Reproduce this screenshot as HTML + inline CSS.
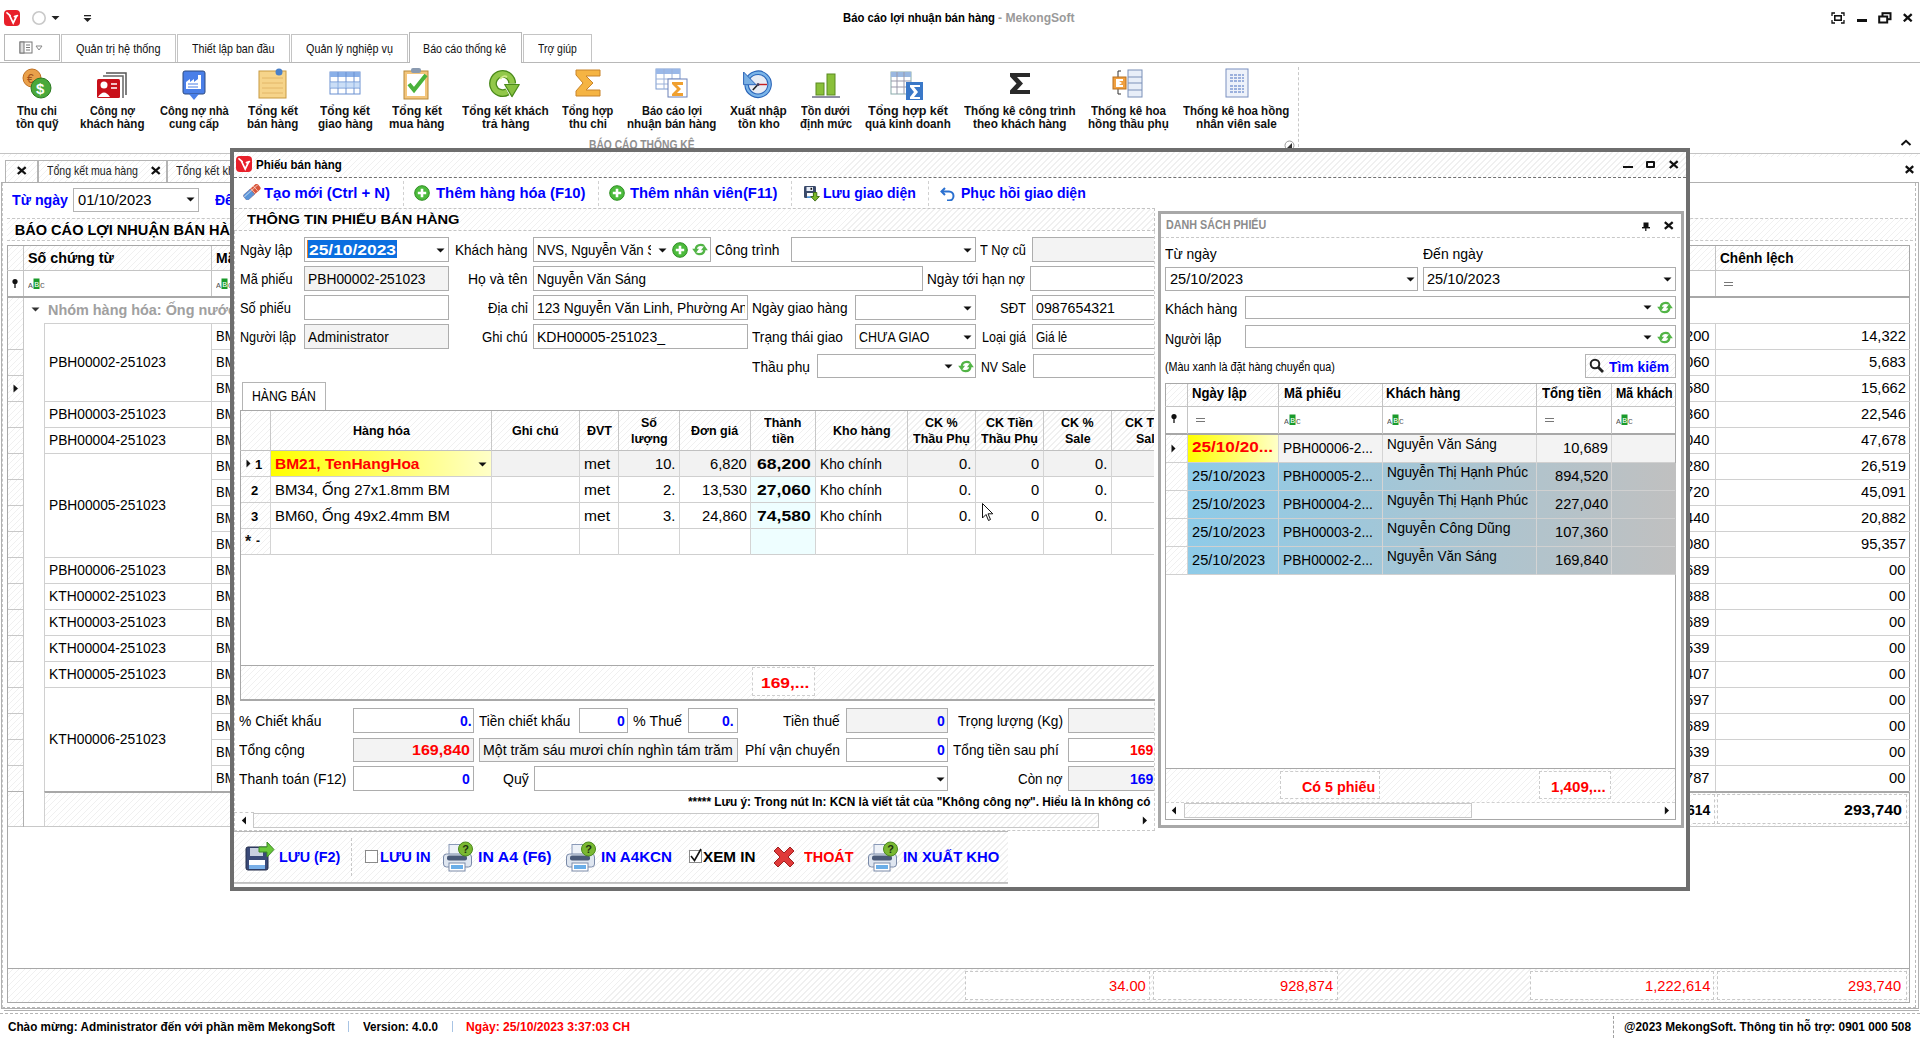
<!DOCTYPE html><html><head><meta charset="utf-8"><style>
html,body{margin:0;padding:0;width:1920px;height:1038px;overflow:hidden;background:#fff}
#root{position:relative;width:1920px;height:1038px;overflow:hidden;font-family:"Liberation Sans",sans-serif;color:#000}
#root div,#root span,#root svg{position:absolute;box-sizing:border-box}
.t{white-space:nowrap;transform-origin:0 0}
.h{background:repeating-linear-gradient(135deg,#fff 0,#fff 3.1px,#f0f0f0 3.1px,#f0f0f0 4.24px)}
.bd{border:1px solid #b4b4b4}
.in{border:1px solid #b9b9b9;background:#fff}
.ing{border:1px solid #b9b9b9;background:#f3f3f3}
</style></head><body><div id="root"><svg style="left:4px;top:10px" width="16" height="16" viewBox="0 0 16 16"><rect x="0" y="0" width="16" height="16" rx="4" fill="#e8202a"/><path d="M3 2.8 L6.2 5.6 M5.2 4.6 L9.2 13 L12.6 6.2 M10.4 6.6 L13.4 5.6" stroke="#fff" stroke-width="1.7" fill="none" stroke-linecap="round"/></svg>
<svg style="left:31px;top:10px" width="16" height="16"><circle cx="8" cy="8" r="6.2" stroke="#c9c9c9" stroke-width="1.6" fill="#fff"/></svg>
<svg style="left:51px;top:15px" width="9" height="6"><path d="M0.5 1 L8.5 1 L4.5 5z" fill="#222"/></svg>
<svg style="left:83px;top:14px" width="9" height="9"><rect x="1" y="1" width="7" height="1.3" fill="#222"/><path d="M0.5 4 L8.5 4 L4.5 8z" fill="#222"/></svg>
<span id="t0" class="t" style="left:843.00px;top:11.74px;font-size:12.48px;line-height:12.48px;font-weight:bold;transform:scaleX(0.9074);">Báo cáo lợi nhuận bán hàng</span>
<span id="t1" class="t" style="left:998.00px;top:11.74px;font-size:12.48px;line-height:12.48px;color:#9a9a9a;font-weight:bold;transform:scaleX(0.9687);">- MekongSoft</span>
<svg style="left:1831px;top:12px" width="14" height="12"><path d="M1 4V1H4 M10 1H13V4 M13 8V11H10 M4 11H1V8" stroke="#111" stroke-width="1.3" fill="none"/><rect x="3.8" y="3.8" width="6.4" height="4.4" stroke="#111" stroke-width="1.6" fill="none"/></svg>
<div style="left:1857px;top:19px;width:10px;height:2.5px;background:#111"></div>
<svg style="left:1878px;top:12px" width="14" height="12"><rect x="4.5" y="1.2" width="8" height="6" stroke="#111" stroke-width="2" fill="none"/><rect x="1.2" y="4.5" width="8" height="6" stroke="#111" stroke-width="2" fill="#fff"/></svg>
<svg style="left:1901.5px;top:12.8px" width="11.5" height="9.5"><path d="M1.80 1.2 L9.70 8.30 M9.70 1.2 L1.80 8.30" stroke="#111" stroke-width="2.3"/></svg>
<div style="left:0px;top:62px;width:1920px;height:1px;background:#b8b8b8"></div>
<div style="left:4px;top:34px;width:56px;height:27px;border:1px solid #b8b8b8;background:#fff"></div>
<svg style="left:19px;top:41px" width="26" height="14"><rect x="1" y="1" width="12" height="11" fill="#fff" stroke="#777" stroke-width="1"/><rect x="1" y="1" width="4" height="11" fill="#ddd" stroke="#777" stroke-width="1"/><path d="M7 4h4M7 6.5h4M7 9h4" stroke="#777"/><path d="M17 5 L23 5 L20 9z" fill="#fff" stroke="#888"/></svg>
<div style="left:61px;top:34px;width:115px;height:28px;border:1px solid #c4c4c4;border-bottom:none;background:#fff"></div>
<span id="t2" class="t" style="left:75.50px;top:43.08px;font-size:12.9px;line-height:12.9px;color:#111;transform:scaleX(0.8482);">Quản trị hệ thống</span>
<div style="left:177px;top:34px;width:113px;height:28px;border:1px solid #c4c4c4;border-bottom:none;background:#fff"></div>
<span id="t3" class="t" style="left:191.75px;top:43.08px;font-size:12.9px;line-height:12.9px;color:#111;transform:scaleX(0.8281);">Thiết lập ban đầu</span>
<div style="left:291px;top:34px;width:117px;height:28px;border:1px solid #c4c4c4;border-bottom:none;background:#fff"></div>
<span id="t4" class="t" style="left:305.50px;top:43.08px;font-size:12.9px;line-height:12.9px;color:#111;transform:scaleX(0.8372);">Quản lý nghiệp vụ</span>
<div style="left:523px;top:34px;width:69px;height:28px;border:1px solid #c4c4c4;border-bottom:none;background:#fff"></div>
<span id="t5" class="t" style="left:537.50px;top:43.08px;font-size:12.9px;line-height:12.9px;color:#111;transform:scaleX(0.8055);">Trợ giúp</span>
<div style="left:409px;top:32px;width:113px;height:31px;border:1px solid #b8b8b8;border-bottom:none;background:#fff"></div>
<span id="t6" class="t" style="left:423.00px;top:43.08px;font-size:12.9px;line-height:12.9px;color:#111;transform:scaleX(0.8296);">Báo cáo thống kê</span>
<span id="t7" class="t" style="left:17.00px;top:105.24px;font-size:12.48px;line-height:12.48px;color:#111;font-weight:bold;transform:scaleX(0.9020);">Thu chi</span>
<span id="t8" class="t" style="left:15.75px;top:118.24px;font-size:12.48px;line-height:12.48px;color:#111;font-weight:bold;transform:scaleX(0.9438);">tồn quỹ</span>
<span id="t9" class="t" style="left:90.00px;top:105.24px;font-size:12.48px;line-height:12.48px;color:#111;font-weight:bold;transform:scaleX(0.8685);">Công nợ</span>
<span id="t10" class="t" style="left:80.25px;top:118.24px;font-size:12.48px;line-height:12.48px;color:#111;font-weight:bold;transform:scaleX(0.9308);">khách hàng</span>
<span id="t11" class="t" style="left:160.03px;top:105.24px;font-size:12.48px;line-height:12.48px;color:#111;font-weight:bold;transform:scaleX(0.8878);">Công nợ nhà</span>
<span id="t12" class="t" style="left:169.40px;top:118.24px;font-size:12.48px;line-height:12.48px;color:#111;font-weight:bold;transform:scaleX(0.9135);">cung cấp</span>
<span id="t13" class="t" style="left:248.00px;top:105.24px;font-size:12.48px;line-height:12.48px;color:#111;font-weight:bold;transform:scaleX(0.9624);">Tổng kết</span>
<span id="t14" class="t" style="left:247.38px;top:118.24px;font-size:12.48px;line-height:12.48px;color:#111;font-weight:bold;transform:scaleX(0.9247);">bán hàng</span>
<span id="t15" class="t" style="left:320.00px;top:105.24px;font-size:12.48px;line-height:12.48px;color:#111;font-weight:bold;transform:scaleX(0.9624);">Tổng kết</span>
<span id="t16" class="t" style="left:317.50px;top:118.24px;font-size:12.48px;line-height:12.48px;color:#111;font-weight:bold;transform:scaleX(0.9339);">giao hàng</span>
<span id="t17" class="t" style="left:392.00px;top:105.24px;font-size:12.48px;line-height:12.48px;color:#111;font-weight:bold;transform:scaleX(0.9624);">Tổng kết</span>
<span id="t18" class="t" style="left:389.25px;top:118.24px;font-size:12.48px;line-height:12.48px;color:#111;font-weight:bold;transform:scaleX(0.9424);">mua hàng</span>
<span id="t19" class="t" style="left:462.02px;top:105.24px;font-size:12.48px;line-height:12.48px;color:#111;font-weight:bold;transform:scaleX(0.9486);">Tổng kết khách</span>
<span id="t20" class="t" style="left:481.52px;top:118.24px;font-size:12.48px;line-height:12.48px;color:#111;font-weight:bold;transform:scaleX(0.9708);">trả hàng</span>
<span id="t21" class="t" style="left:562.38px;top:105.24px;font-size:12.48px;line-height:12.48px;color:#111;font-weight:bold;transform:scaleX(0.8831);">Tổng hợp</span>
<span id="t22" class="t" style="left:569.00px;top:118.24px;font-size:12.48px;line-height:12.48px;color:#111;font-weight:bold;transform:scaleX(0.9297);">thu chi</span>
<span id="t23" class="t" style="left:642.00px;top:105.24px;font-size:12.48px;line-height:12.48px;color:#111;font-weight:bold;transform:scaleX(0.8854);">Báo cáo lợi</span>
<span id="t24" class="t" style="left:627.38px;top:118.24px;font-size:12.48px;line-height:12.48px;color:#111;font-weight:bold;transform:scaleX(0.9270);">nhuận bán hàng</span>
<span id="t25" class="t" style="left:730.02px;top:105.24px;font-size:12.48px;line-height:12.48px;color:#111;font-weight:bold;transform:scaleX(0.9414);">Xuất nhập</span>
<span id="t26" class="t" style="left:737.52px;top:118.24px;font-size:12.48px;line-height:12.48px;color:#111;font-weight:bold;transform:scaleX(0.9271);">tồn kho</span>
<span id="t27" class="t" style="left:801.23px;top:105.24px;font-size:12.48px;line-height:12.48px;color:#111;font-weight:bold;transform:scaleX(0.8816);">Tồn dưới</span>
<span id="t28" class="t" style="left:799.60px;top:118.24px;font-size:12.48px;line-height:12.48px;color:#111;font-weight:bold;transform:scaleX(0.9150);">định mức</span>
<span id="t29" class="t" style="left:867.50px;top:105.24px;font-size:12.48px;line-height:12.48px;color:#111;font-weight:bold;transform:scaleX(1.0061);">Tổng hợp kết</span>
<span id="t30" class="t" style="left:864.62px;top:118.24px;font-size:12.48px;line-height:12.48px;color:#111;font-weight:bold;transform:scaleX(0.9306);">quả kinh doanh</span>
<span id="t31" class="t" style="left:964.25px;top:105.24px;font-size:12.48px;line-height:12.48px;color:#111;font-weight:bold;transform:scaleX(0.9304);">Thống kê công trình</span>
<span id="t32" class="t" style="left:973.25px;top:118.24px;font-size:12.48px;line-height:12.48px;color:#111;font-weight:bold;transform:scaleX(0.9437);">theo khách hàng</span>
<span id="t33" class="t" style="left:1091.25px;top:105.24px;font-size:12.48px;line-height:12.48px;color:#111;font-weight:bold;transform:scaleX(0.9254);">Thống kê hoa</span>
<span id="t34" class="t" style="left:1088.38px;top:118.24px;font-size:12.48px;line-height:12.48px;color:#111;font-weight:bold;transform:scaleX(0.9327);">hồng thầu phụ</span>
<span id="t35" class="t" style="left:1183.28px;top:105.24px;font-size:12.48px;line-height:12.48px;color:#111;font-weight:bold;transform:scaleX(0.9240);">Thống kê hoa hồng</span>
<span id="t36" class="t" style="left:1196.03px;top:118.24px;font-size:12.48px;line-height:12.48px;color:#111;font-weight:bold;transform:scaleX(0.9396);">nhân viên sale</span>
<svg style="left:20.0px;top:66px" width="34" height="34" viewBox="0 0 34 34"><circle cx="12" cy="12" r="9" fill="#e9a04a" stroke="#c07020"/><text x="7" y="17" font-size="12" fill="#a0501a" font-family="Liberation Sans">€</text><circle cx="21" cy="22" r="10" fill="#4aa83a" stroke="#2a7a20"/><text x="16" y="28" font-size="15" font-weight="bold" fill="#fff" font-family="Liberation Sans">$</text></svg>
<svg style="left:95.5px;top:69px" width="34" height="34" viewBox="0 0 34 34"><path d="M10 4h20v22" stroke="#555" fill="none" stroke-width="1.5"/><path d="M7 7h20v22" stroke="#666" fill="none" stroke-width="1.5"/><rect x="1" y="10" width="23" height="19" rx="1.5" fill="#c8101a"/><circle cx="8" cy="16" r="3.5" fill="#fff"/><path d="M2 28 q6 -9 12 0z" fill="#fff"/><path d="M15 15h6M15 19h6" stroke="#fff" stroke-width="1.5"/></svg>
<svg style="left:177.4px;top:69px" width="34" height="34" viewBox="0 0 34 34"><rect x="6" y="2" width="22" height="23" rx="2" fill="#4a7fe8" stroke="#2d4a80"/><path d="M12 25 L17 31 L22 25z" fill="#4a7fe8"/><path d="M9 20V13l4 -3v3l4 -3v3l4 -3V6h3v14z" fill="#fff"/><path d="M11 15h10M11 18h10" stroke="#4a7fe8" stroke-width="1.2"/></svg>
<svg style="left:256.0px;top:66px" width="34" height="34" viewBox="0 0 34 34"><rect x="3" y="5" width="27" height="27" fill="#f6d48a" stroke="#c89a40"/><path d="M6 12h21M6 17h21M6 22h21M6 27h21" stroke="#e0b060" stroke-width="0.8"/><circle cx="23" cy="6" r="3.5" fill="#4a80c8"/></svg>
<svg style="left:328.0px;top:66px" width="34" height="34" viewBox="0 0 34 34"><rect x="2" y="6" width="30" height="22" fill="#fff" stroke="#6a90d0"/><rect x="2" y="6" width="30" height="5" fill="#8ab0e8"/><path d="M2 16h30M2 22h30M10 6v22M18 6v22M26 6v22" stroke="#6a90d0"/><rect x="2" y="16" width="30" height="6" fill="#a8c8f0" opacity="0.6"/></svg>
<svg style="left:400.0px;top:66px" width="34" height="34" viewBox="0 0 34 34"><rect x="4" y="5" width="24" height="28" fill="#f3c57c" stroke="#b88a3a"/><rect x="7" y="8" width="18" height="22" fill="#fff"/><rect x="11" y="2" width="10" height="5" rx="2" fill="#8a9ab0"/><path d="M9 18 L14 24 L26 9" stroke="#4ab23a" stroke-width="4" fill="none"/></svg>
<svg style="left:488.4px;top:66px" width="34" height="34" viewBox="0 0 34 34"><path d="M24.2 17.5 A9.6 9.6 0 1 0 19.4 25.8" stroke="#4a8a1a" stroke-width="7.8" fill="none"/><path d="M24.2 17.5 A9.6 9.6 0 1 0 19.4 25.8" stroke="#92c84a" stroke-width="5.2" fill="none"/><path d="M12.2 13 A5 5 0 0 1 19 11" stroke="#d0ea8a" stroke-width="2" fill="none"/><path d="M16.7 18.5 L31.3 18.5 L24 30.6z" fill="#86c040" stroke="#4a8a1a" stroke-width="1.2" stroke-linejoin="round"/></svg>
<svg style="left:571.0px;top:66px" width="34" height="34" viewBox="0 0 34 34"><path d="M5 4 H29 V10 H15 L22 17 L15 24 H29 V30 H5 V25 L12 17 L5 9z" fill="#f5b443" stroke="#c8842a"/></svg>
<svg style="left:655.0px;top:66px" width="34" height="34" viewBox="0 0 34 34"><rect x="1" y="3" width="24" height="20" fill="#fff" stroke="#7a9ad0"/><rect x="1" y="3" width="24" height="5" fill="#9ab8e8"/><path d="M1 13h24M1 18h24M9 3v20M17 3v20" stroke="#9ab0d8"/><rect x="13" y="13" width="19" height="18" fill="#fff" stroke="#6a80b8"/><path d="M17 16h11v3h-6l4 4-4 4h6v3H17v-2l5-5-5-5z" fill="#f0a030"/></svg>
<svg style="left:741.4px;top:66px" width="34" height="34" viewBox="0 0 34 34"><circle cx="17" cy="18" r="10" fill="#e8ecf4"/><path d="M6.2 14.5 A11.5 11.5 0 1 1 5.6 19" stroke="#2a64b8" stroke-width="4.6" fill="none"/><path d="M6.2 14.5 A11.5 11.5 0 1 1 5.6 19" stroke="#7ab4e8" stroke-width="2.4" fill="none"/><path d="M2.6 6 L2.6 18.7 L15 18.7z" fill="#7ab0e4" stroke="#2a64b8" stroke-width="1" stroke-linejoin="round"/><path d="M17 18.5 L11.8 24" stroke="#222" stroke-width="1.6"/><path d="M17 18.5 H26" stroke="#c82020" stroke-width="1.4"/><circle cx="17" cy="18.5" r="1.5" fill="#446"/></svg>
<svg style="left:808.6px;top:66px" width="34" height="34" viewBox="0 0 34 34"><rect x="7" y="17" width="8" height="12" fill="#8ac03a" stroke="#5a8a20"/><rect x="18" y="8" width="8" height="21" fill="#8ac03a" stroke="#5a8a20"/><path d="M3 31h28" stroke="#446" stroke-width="1.2"/></svg>
<svg style="left:890.0px;top:66px" width="34" height="34" viewBox="0 0 34 34"><rect x="1" y="6" width="20" height="22" fill="#fff" stroke="#8aa"/><rect x="1" y="6" width="20" height="5" fill="#9ab8e0"/><path d="M1 15h20M1 21h20M7 6v22M14 6v22" stroke="#99a"/><rect x="16" y="16" width="17" height="18" fill="#3a78c8"/><path d="M20 19h10v2h-6l4 5-4 5h6v2H20v-2l4-5-4-5z" fill="#fff"/></svg>
<svg style="left:1003.0px;top:66px" width="34" height="34" viewBox="0 0 34 34"><path d="M7 7 H27 V11 H14 L20 17.5 L14 24 H27 V28 H7 V24.5 L13.5 17.5 L7 10.5z" fill="#2a2a2a"/></svg>
<svg style="left:1111.8px;top:66px" width="34" height="34" viewBox="0 0 34 34"><path d="M9 5H6V28H9" stroke="#333" fill="none"/><rect x="16" y="4" width="14" height="27" fill="#e8eef8" stroke="#7a90b8"/><path d="M16 11h14M16 17h14M16 24h14" stroke="#7a90b8"/><rect x="1" y="11" width="13" height="12" fill="#f0a040" stroke="#b87020"/><path d="M4 13h7v2h-4l3 2-3 2h4v2H4z" fill="#fff"/></svg>
<svg style="left:1219.4px;top:66px" width="34" height="34" viewBox="0 0 34 34"><rect x="7" y="3" width="22" height="28" fill="#eef2fa" stroke="#7a90c0"/><path d="M11 9h14M11 12h14M11 15h14M11 20h14M11 23h14M11 26h14" stroke="#4a70c0" stroke-width="1.2" stroke-dasharray="3 1"/></svg>
<div style="left:580px;top:136px;width:130px;height:12px;overflow:hidden"><span id="t37" class="t" style="left:9.00px;top:3.24px;font-size:12.48px;line-height:12.48px;color:#909090;font-weight:bold;transform:scaleX(0.8232);">BÁO CÁO THỐNG KÊ</span></div>
<div style="left:1298px;top:67px;width:0;height:80px;border-left:1px dashed #c8c8c8"></div>
<svg style="left:1284px;top:140px" width="11" height="8"><circle cx="5.5" cy="5.5" r="4.5" fill="#fff" stroke="#999"/><path d="M3 8 L8 8 L8 3z" fill="#333"/></svg>
<svg style="left:1900px;top:139px" width="12" height="7"><path d="M1.5 6 L6 1.8 L10.5 6" stroke="#111" stroke-width="2" fill="none"/></svg>
<div style="left:0px;top:153px;width:1920px;height:1px;background:#c4c4c4"></div>
<div class="h" style="left:0px;top:154px;width:1920px;height:3px;"></div>
<div class="h" style="left:5px;top:160px;width:33px;height:22px;border:1px solid #b4b4b4;border-bottom:none"></div>
<svg style="left:15.899999999999999px;top:165.9px" width="11.5" height="9.2"><path d="M1.80 1.2 L9.70 8.00 M9.70 1.2 L1.80 8.00" stroke="#111" stroke-width="2.3"/></svg>
<div class="h" style="left:38px;top:160px;width:129px;height:22px;border:1px solid #b4b4b4;border-bottom:none"></div>
<span id="t38" class="t" style="left:47.00px;top:165.28px;font-size:12.9px;line-height:12.9px;color:#222;transform:scaleX(0.8192);">Tổng kết mua hàng</span>
<svg style="left:150px;top:166px" width="11.5" height="9.2"><path d="M1.80 1.2 L9.70 8.00 M9.70 1.2 L1.80 8.00" stroke="#111" stroke-width="2.3"/></svg>
<div class="h" style="left:167px;top:160px;width:80px;height:22px;border:1px solid #b4b4b4;border-bottom:none"></div>
<span id="t39" class="t" style="left:176.00px;top:165.28px;font-size:12.9px;line-height:12.9px;color:#222;transform:scaleX(0.8631);">Tổng kết khách trả hàng</span>
<svg style="left:1904px;top:164.8px" width="11" height="9"><path d="M1.80 1.2 L9.20 7.80 M9.20 1.2 L1.80 7.80" stroke="#111" stroke-width="2.3"/></svg>
<div style="left:1px;top:182px;width:1918px;height:827px;border:1px solid #b0b0b0;background:#fff"></div>
<div style="left:2px;top:183px;width:1914px;height:825px;border-right:1px dashed #b8b8b8;border-bottom:1px dashed #b8b8b8;border-left:1px dashed #c8c8c8"></div>
<div style="left:4px;top:1010px;width:1915px;height:1px;background:#b0b0b0"></div>
<div style="left:0;top:1013px;width:1920px;height:0;border-top:1px dashed #b4b4b4"></div>
<span id="t40" class="t" style="left:11.50px;top:192.57px;font-size:14.56px;line-height:14.56px;color:#0000ff;font-weight:bold;transform:scaleX(0.9752);">Từ ngày</span>
<div style="left:73px;top:188px;width:126px;height:24px;border:1px solid #b4b4b4;background:#fff"></div>
<span id="t41" class="t" style="left:78.00px;top:193.87px;font-size:13.97px;line-height:13.97px;transform:scaleX(1.0512);">01/10/2023</span>
<svg style="left:186px;top:197px" width="9" height="6"><path d="M0.5 0.5 L8.5 0.5 L4.5 4.5z" fill="#111"/></svg>
<span id="t42" class="t" style="left:215.00px;top:192.57px;font-size:14.56px;line-height:14.56px;color:#0000ff;font-weight:bold;transform:scaleX(0.9615);">Đến ngày</span>
<div style="left:7px;top:218px;width:1906px;height:23px;border-top:1px dashed #c8c8c8;border-bottom:1px dashed #c8c8c8" class="h"></div>
<span id="t43" class="t" style="left:14.75px;top:222.97px;font-size:14.56px;line-height:14.56px;font-weight:bold;">BÁO CÁO LỢI NHUẬN BÁN HÀNG</span>
<div style="left:7px;top:245px;width:1903px;height:758px;border:1px solid #a8a8a8;background:#fff"></div>
<div class="h" style="left:8px;top:246px;width:1901px;height:24px;"></div>
<div style="left:7px;top:270px;width:1903px;height:1px;background:#c4c4c4"></div>
<div style="left:7px;top:296px;width:1903px;height:2px;background:#a8a8a8"></div>
<div style="left:23px;top:246px;width:1px;height:50px;background:#c4c4c4"></div>
<div style="left:211px;top:246px;width:1px;height:50px;background:#c4c4c4"></div>
<div style="left:1715px;top:246px;width:1px;height:50px;background:#c4c4c4"></div>
<span id="t44" class="t" style="left:28.00px;top:251.47px;font-size:14.56px;line-height:14.56px;font-weight:bold;transform:scaleX(0.9846);">Số chứng từ</span>
<span id="t45" class="t" style="left:216.00px;top:251.47px;font-size:14.56px;line-height:14.56px;font-weight:bold;transform:scaleX(0.9615);">Mã hàng</span>
<span id="t46" class="t" style="left:1720.00px;top:251.47px;font-size:14.56px;line-height:14.56px;font-weight:bold;transform:scaleX(0.9374);">Chênh lệch</span>
<svg style="left:28px;top:278px" width="18" height="12"><text x="0" y="9.5" font-size="8" fill="#555" font-family="Liberation Mono">A</text><rect x="5.5" y="0.5" width="6" height="10.5" fill="#1a9a2a"/><text x="6.2" y="9" font-size="8" fill="#fff" font-family="Liberation Mono">B</text><text x="12" y="9.5" font-size="8" fill="#555" font-family="Liberation Mono">C</text></svg>
<svg style="left:216px;top:278px" width="18" height="12"><text x="0" y="9.5" font-size="8" fill="#555" font-family="Liberation Mono">A</text><rect x="5.5" y="0.5" width="6" height="10.5" fill="#1a9a2a"/><text x="6.2" y="9" font-size="8" fill="#fff" font-family="Liberation Mono">B</text><text x="12" y="9.5" font-size="8" fill="#555" font-family="Liberation Mono">C</text></svg>
<div style="left:1724px;top:282px;width:9px;height:1px;background:#777"></div>
<div style="left:1724px;top:285px;width:9px;height:1px;background:#777"></div>
<svg style="left:11px;top:278px" width="8" height="11"><circle cx="4" cy="3.5" r="2.6" fill="#111"/><path d="M4 5v5" stroke="#111" stroke-width="1.3"/></svg>
<div class="h" style="left:8px;top:298px;width:15px;height:493px;"></div>
<div style="left:23px;top:298px;width:1px;height:493px;background:#c8c8c8"></div>
<svg style="left:31px;top:307px" width="9" height="6"><path d="M0.5 0.5 L8.5 0.5 L4.5 4.5z" fill="#333"/></svg>
<span id="t47" class="t" style="left:48.00px;top:302.97px;font-size:14.56px;line-height:14.56px;color:#a0a0a0;font-weight:bold;transform:scaleX(0.9904);">Nhóm hàng hóa: Ống nước lạnh</span>
<div style="left:44px;top:323px;width:1866px;height:1px;background:#d0d0d0"></div>
<div style="left:8px;top:349px;width:15px;height:1px;background:#c8c8c8"></div>
<div style="left:211px;top:349px;width:1699px;height:1px;background:#d0d0d0"></div>
<span id="t48" class="t" style="left:216.00px;top:329.87px;font-size:13.97px;line-height:13.97px;transform:scaleX(0.9302);">BM21</span>
<span id="t49" class="t" style="left:1860.52px;top:329.42px;font-size:14.51px;line-height:14.51px;transform:scaleX(1.0140);">14,322</span>
<span id="t50" class="t" style="left:1685.46px;top:329.42px;font-size:14.51px;line-height:14.51px;transform:scaleX(1.0140);">200</span>
<div style="left:8px;top:375px;width:15px;height:1px;background:#c8c8c8"></div>
<div style="left:211px;top:375px;width:1699px;height:1px;background:#d0d0d0"></div>
<span id="t51" class="t" style="left:216.00px;top:355.87px;font-size:13.97px;line-height:13.97px;transform:scaleX(0.9302);">BM21</span>
<span id="t52" class="t" style="left:1868.70px;top:355.42px;font-size:14.51px;line-height:14.51px;transform:scaleX(1.0140);">5,683</span>
<span id="t53" class="t" style="left:1685.46px;top:355.42px;font-size:14.51px;line-height:14.51px;transform:scaleX(1.0140);">060</span>
<div style="left:8px;top:401px;width:15px;height:1px;background:#c8c8c8"></div>
<div style="left:211px;top:401px;width:1699px;height:1px;background:#d0d0d0"></div>
<span id="t54" class="t" style="left:216.00px;top:381.87px;font-size:13.97px;line-height:13.97px;transform:scaleX(0.9302);">BM21</span>
<span id="t55" class="t" style="left:1860.52px;top:381.42px;font-size:14.51px;line-height:14.51px;transform:scaleX(1.0140);">15,662</span>
<span id="t56" class="t" style="left:1685.46px;top:381.42px;font-size:14.51px;line-height:14.51px;transform:scaleX(1.0140);">580</span>
<div style="left:8px;top:427px;width:15px;height:1px;background:#c8c8c8"></div>
<div style="left:211px;top:427px;width:1699px;height:1px;background:#d0d0d0"></div>
<span id="t57" class="t" style="left:216.00px;top:407.87px;font-size:13.97px;line-height:13.97px;transform:scaleX(0.9302);">BM21</span>
<span id="t58" class="t" style="left:1860.52px;top:407.42px;font-size:14.51px;line-height:14.51px;transform:scaleX(1.0140);">22,546</span>
<span id="t59" class="t" style="left:1685.46px;top:407.42px;font-size:14.51px;line-height:14.51px;transform:scaleX(1.0140);">360</span>
<div style="left:8px;top:453px;width:15px;height:1px;background:#c8c8c8"></div>
<div style="left:211px;top:453px;width:1699px;height:1px;background:#d0d0d0"></div>
<span id="t60" class="t" style="left:216.00px;top:433.87px;font-size:13.97px;line-height:13.97px;transform:scaleX(0.9302);">BM21</span>
<span id="t61" class="t" style="left:1860.52px;top:433.42px;font-size:14.51px;line-height:14.51px;transform:scaleX(1.0140);">47,678</span>
<span id="t62" class="t" style="left:1685.46px;top:433.42px;font-size:14.51px;line-height:14.51px;transform:scaleX(1.0140);">040</span>
<div style="left:8px;top:479px;width:15px;height:1px;background:#c8c8c8"></div>
<div style="left:211px;top:479px;width:1699px;height:1px;background:#d0d0d0"></div>
<span id="t63" class="t" style="left:216.00px;top:459.87px;font-size:13.97px;line-height:13.97px;transform:scaleX(0.9302);">BM21</span>
<span id="t64" class="t" style="left:1860.52px;top:459.42px;font-size:14.51px;line-height:14.51px;transform:scaleX(1.0140);">26,519</span>
<span id="t65" class="t" style="left:1685.46px;top:459.42px;font-size:14.51px;line-height:14.51px;transform:scaleX(1.0140);">280</span>
<div style="left:8px;top:505px;width:15px;height:1px;background:#c8c8c8"></div>
<div style="left:211px;top:505px;width:1699px;height:1px;background:#d0d0d0"></div>
<span id="t66" class="t" style="left:216.00px;top:485.87px;font-size:13.97px;line-height:13.97px;transform:scaleX(0.9302);">BM21</span>
<span id="t67" class="t" style="left:1860.52px;top:485.42px;font-size:14.51px;line-height:14.51px;transform:scaleX(1.0140);">45,091</span>
<span id="t68" class="t" style="left:1685.46px;top:485.42px;font-size:14.51px;line-height:14.51px;transform:scaleX(1.0140);">720</span>
<div style="left:8px;top:531px;width:15px;height:1px;background:#c8c8c8"></div>
<div style="left:211px;top:531px;width:1699px;height:1px;background:#d0d0d0"></div>
<span id="t69" class="t" style="left:216.00px;top:511.87px;font-size:13.97px;line-height:13.97px;transform:scaleX(0.9302);">BM21</span>
<span id="t70" class="t" style="left:1860.52px;top:511.42px;font-size:14.51px;line-height:14.51px;transform:scaleX(1.0140);">20,882</span>
<span id="t71" class="t" style="left:1685.46px;top:511.42px;font-size:14.51px;line-height:14.51px;transform:scaleX(1.0140);">440</span>
<div style="left:8px;top:557px;width:15px;height:1px;background:#c8c8c8"></div>
<div style="left:211px;top:557px;width:1699px;height:1px;background:#d0d0d0"></div>
<span id="t72" class="t" style="left:216.00px;top:537.87px;font-size:13.97px;line-height:13.97px;transform:scaleX(0.9302);">BM21</span>
<span id="t73" class="t" style="left:1860.52px;top:537.42px;font-size:14.51px;line-height:14.51px;transform:scaleX(1.0140);">95,357</span>
<span id="t74" class="t" style="left:1685.46px;top:537.42px;font-size:14.51px;line-height:14.51px;transform:scaleX(1.0140);">080</span>
<div style="left:8px;top:583px;width:15px;height:1px;background:#c8c8c8"></div>
<div style="left:211px;top:583px;width:1699px;height:1px;background:#d0d0d0"></div>
<span id="t75" class="t" style="left:216.00px;top:563.87px;font-size:13.97px;line-height:13.97px;transform:scaleX(0.9302);">BM21</span>
<span id="t76" class="t" style="left:1889.13px;top:563.42px;font-size:14.51px;line-height:14.51px;transform:scaleX(1.0140);">00</span>
<span id="t77" class="t" style="left:1685.46px;top:563.42px;font-size:14.51px;line-height:14.51px;transform:scaleX(1.0140);">689</span>
<div style="left:8px;top:609px;width:15px;height:1px;background:#c8c8c8"></div>
<div style="left:211px;top:609px;width:1699px;height:1px;background:#d0d0d0"></div>
<span id="t78" class="t" style="left:216.00px;top:589.87px;font-size:13.97px;line-height:13.97px;transform:scaleX(0.9302);">BM21</span>
<span id="t79" class="t" style="left:1889.13px;top:589.42px;font-size:14.51px;line-height:14.51px;transform:scaleX(1.0140);">00</span>
<span id="t80" class="t" style="left:1685.46px;top:589.42px;font-size:14.51px;line-height:14.51px;transform:scaleX(1.0140);">388</span>
<div style="left:8px;top:635px;width:15px;height:1px;background:#c8c8c8"></div>
<div style="left:211px;top:635px;width:1699px;height:1px;background:#d0d0d0"></div>
<span id="t81" class="t" style="left:216.00px;top:615.87px;font-size:13.97px;line-height:13.97px;transform:scaleX(0.9302);">BM21</span>
<span id="t82" class="t" style="left:1889.13px;top:615.42px;font-size:14.51px;line-height:14.51px;transform:scaleX(1.0140);">00</span>
<span id="t83" class="t" style="left:1685.46px;top:615.42px;font-size:14.51px;line-height:14.51px;transform:scaleX(1.0140);">689</span>
<div style="left:8px;top:661px;width:15px;height:1px;background:#c8c8c8"></div>
<div style="left:211px;top:661px;width:1699px;height:1px;background:#d0d0d0"></div>
<span id="t84" class="t" style="left:216.00px;top:641.87px;font-size:13.97px;line-height:13.97px;transform:scaleX(0.9302);">BM21</span>
<span id="t85" class="t" style="left:1889.13px;top:641.42px;font-size:14.51px;line-height:14.51px;transform:scaleX(1.0140);">00</span>
<span id="t86" class="t" style="left:1685.46px;top:641.42px;font-size:14.51px;line-height:14.51px;transform:scaleX(1.0140);">539</span>
<div style="left:8px;top:687px;width:15px;height:1px;background:#c8c8c8"></div>
<div style="left:211px;top:687px;width:1699px;height:1px;background:#d0d0d0"></div>
<span id="t87" class="t" style="left:216.00px;top:667.87px;font-size:13.97px;line-height:13.97px;transform:scaleX(0.9302);">BM21</span>
<span id="t88" class="t" style="left:1889.13px;top:667.42px;font-size:14.51px;line-height:14.51px;transform:scaleX(1.0140);">00</span>
<span id="t89" class="t" style="left:1685.46px;top:667.42px;font-size:14.51px;line-height:14.51px;transform:scaleX(1.0140);">407</span>
<div style="left:8px;top:713px;width:15px;height:1px;background:#c8c8c8"></div>
<div style="left:211px;top:713px;width:1699px;height:1px;background:#d0d0d0"></div>
<span id="t90" class="t" style="left:216.00px;top:693.87px;font-size:13.97px;line-height:13.97px;transform:scaleX(0.9302);">BM21</span>
<span id="t91" class="t" style="left:1889.13px;top:693.42px;font-size:14.51px;line-height:14.51px;transform:scaleX(1.0140);">00</span>
<span id="t92" class="t" style="left:1685.46px;top:693.42px;font-size:14.51px;line-height:14.51px;transform:scaleX(1.0140);">597</span>
<div style="left:8px;top:739px;width:15px;height:1px;background:#c8c8c8"></div>
<div style="left:211px;top:739px;width:1699px;height:1px;background:#d0d0d0"></div>
<span id="t93" class="t" style="left:216.00px;top:719.87px;font-size:13.97px;line-height:13.97px;transform:scaleX(0.9302);">BM21</span>
<span id="t94" class="t" style="left:1889.13px;top:719.42px;font-size:14.51px;line-height:14.51px;transform:scaleX(1.0140);">00</span>
<span id="t95" class="t" style="left:1685.46px;top:719.42px;font-size:14.51px;line-height:14.51px;transform:scaleX(1.0140);">689</span>
<div style="left:8px;top:765px;width:15px;height:1px;background:#c8c8c8"></div>
<div style="left:211px;top:765px;width:1699px;height:1px;background:#d0d0d0"></div>
<span id="t96" class="t" style="left:216.00px;top:745.87px;font-size:13.97px;line-height:13.97px;transform:scaleX(0.9302);">BM21</span>
<span id="t97" class="t" style="left:1889.13px;top:745.42px;font-size:14.51px;line-height:14.51px;transform:scaleX(1.0140);">00</span>
<span id="t98" class="t" style="left:1685.46px;top:745.42px;font-size:14.51px;line-height:14.51px;transform:scaleX(1.0140);">539</span>
<div style="left:8px;top:791px;width:15px;height:1px;background:#c8c8c8"></div>
<div style="left:211px;top:791px;width:1699px;height:1px;background:#d0d0d0"></div>
<span id="t99" class="t" style="left:216.00px;top:771.87px;font-size:13.97px;line-height:13.97px;transform:scaleX(0.9302);">BM21</span>
<span id="t100" class="t" style="left:1889.13px;top:771.42px;font-size:14.51px;line-height:14.51px;transform:scaleX(1.0140);">00</span>
<span id="t101" class="t" style="left:1685.46px;top:771.42px;font-size:14.51px;line-height:14.51px;transform:scaleX(1.0140);">787</span>
<div style="left:44px;top:401px;width:167px;height:1px;background:#d0d0d0"></div>
<span id="t102" class="t" style="left:49.00px;top:355.42px;font-size:14.51px;line-height:14.51px;transform:scaleX(0.9484);">PBH00002-251023</span>
<div style="left:44px;top:427px;width:167px;height:1px;background:#d0d0d0"></div>
<span id="t103" class="t" style="left:49.00px;top:407.42px;font-size:14.51px;line-height:14.51px;transform:scaleX(0.9484);">PBH00003-251023</span>
<div style="left:44px;top:453px;width:167px;height:1px;background:#d0d0d0"></div>
<span id="t104" class="t" style="left:49.00px;top:433.42px;font-size:14.51px;line-height:14.51px;transform:scaleX(0.9484);">PBH00004-251023</span>
<div style="left:44px;top:557px;width:167px;height:1px;background:#d0d0d0"></div>
<span id="t105" class="t" style="left:49.00px;top:498.42px;font-size:14.51px;line-height:14.51px;transform:scaleX(0.9484);">PBH00005-251023</span>
<div style="left:44px;top:583px;width:167px;height:1px;background:#d0d0d0"></div>
<span id="t106" class="t" style="left:49.00px;top:563.42px;font-size:14.51px;line-height:14.51px;transform:scaleX(0.9484);">PBH00006-251023</span>
<div style="left:44px;top:609px;width:167px;height:1px;background:#d0d0d0"></div>
<span id="t107" class="t" style="left:49.00px;top:589.42px;font-size:14.51px;line-height:14.51px;transform:scaleX(0.9547);">KTH00002-251023</span>
<div style="left:44px;top:635px;width:167px;height:1px;background:#d0d0d0"></div>
<span id="t108" class="t" style="left:49.00px;top:615.42px;font-size:14.51px;line-height:14.51px;transform:scaleX(0.9547);">KTH00003-251023</span>
<div style="left:44px;top:661px;width:167px;height:1px;background:#d0d0d0"></div>
<span id="t109" class="t" style="left:49.00px;top:641.42px;font-size:14.51px;line-height:14.51px;transform:scaleX(0.9547);">KTH00004-251023</span>
<div style="left:44px;top:687px;width:167px;height:1px;background:#d0d0d0"></div>
<span id="t110" class="t" style="left:49.00px;top:667.42px;font-size:14.51px;line-height:14.51px;transform:scaleX(0.9547);">KTH00005-251023</span>
<div style="left:44px;top:791px;width:167px;height:1px;background:#d0d0d0"></div>
<span id="t111" class="t" style="left:49.00px;top:732.42px;font-size:14.51px;line-height:14.51px;transform:scaleX(0.9547);">KTH00006-251023</span>
<div style="left:44px;top:323px;width:1px;height:468px;background:#d0d0d0"></div>
<div style="left:211px;top:323px;width:1px;height:468px;background:#d0d0d0"></div>
<div style="left:1715px;top:323px;width:1px;height:468px;background:#d0d0d0"></div>
<svg style="left:13px;top:384px" width="6" height="9"><path d="M0.5 0.5 L5 4.5 L0.5 8.5z" fill="#111"/></svg>
<div class="h" style="left:44px;top:791px;width:1865px;height:35px;border-top:2px solid #a8a8a8;border-left:1px solid #d0d0d0"></div>
<div style="left:8px;top:826px;width:1901px;height:1px;background:#c8c8c8"></div>
<div class="h" style="left:8px;top:791px;width:15px;height:35px;"></div>
<div style="left:8px;top:791px;width:15px;height:1px;background:#b0b0b0"></div>
<div style="left:23px;top:791px;width:1px;height:36px;background:#b0b0b0"></div>
<div style="left:1693px;top:794px;width:22px;height:30px;border:1px dashed #c8c8c8;border-left:none;background:#fff"></div>
<div style="left:1717px;top:794px;width:190px;height:30px;border:1px dashed #c8c8c8;background:#fff"></div>
<span id="t112" class="t" style="left:1844.00px;top:802.97px;font-size:14.56px;line-height:14.56px;font-weight:bold;transform:scaleX(1.1028);">293,740</span>
<span id="t113" class="t" style="left:1647.77px;top:802.97px;font-size:14.56px;line-height:14.56px;font-weight:bold;transform:scaleX(0.9615);">1,222,614</span>
<div class="h" style="left:7px;top:968px;width:1903px;height:35px;border:1px solid #a8a8a8"></div>
<div style="left:965px;top:971px;width:185px;height:29px;border:1px dashed #c8c8c8;background:#fff"></div>
<span id="t114" class="t" style="left:1108.70px;top:979.12px;font-size:14.51px;line-height:14.51px;color:#ff0000;transform:scaleX(1.0140);">34.00</span>
<div style="left:1153px;top:971px;width:185px;height:29px;border:1px dashed #c8c8c8;background:#fff"></div>
<span id="t115" class="t" style="left:1279.85px;top:979.12px;font-size:14.51px;line-height:14.51px;color:#ff0000;transform:scaleX(1.0140);">928,874</span>
<div style="left:1530px;top:971px;width:184px;height:29px;border:1px dashed #c8c8c8;background:#fff"></div>
<span id="t116" class="t" style="left:1644.58px;top:979.12px;font-size:14.51px;line-height:14.51px;color:#ff0000;transform:scaleX(1.0140);">1,222,614</span>
<div style="left:1717px;top:971px;width:190px;height:29px;border:1px dashed #c8c8c8;background:#fff"></div>
<span id="t117" class="t" style="left:1848.35px;top:979.12px;font-size:14.51px;line-height:14.51px;color:#ff0000;transform:scaleX(1.0140);">293,740</span>
<span id="t118" class="t" style="left:8.00px;top:1021.98px;font-size:11.96px;line-height:11.96px;font-weight:bold;transform:scaleX(0.9805);">Chào mừng: Administrator đến với phần mềm MekongSoft</span>
<div style="left:348px;top:1021px;width:1px;height:11px;background:#a8c4e4"></div>
<span id="t119" class="t" style="left:362.50px;top:1021.98px;font-size:11.96px;line-height:11.96px;font-weight:bold;transform:scaleX(0.9730);">Version: 4.0.0</span>
<div style="left:452px;top:1021px;width:1px;height:11px;background:#a8c4e4"></div>
<span id="t120" class="t" style="left:465.50px;top:1021.98px;font-size:11.96px;line-height:11.96px;color:#ff0000;font-weight:bold;transform:scaleX(1.0157);">Ngày: 25/10/2023 3:37:03 CH</span>
<div style="left:1613px;top:1016px;width:0;height:22px;border-left:1px dashed #a0a0a0"></div>
<span id="t121" class="t" style="left:1624.00px;top:1021.98px;font-size:11.96px;line-height:11.96px;font-weight:bold;transform:scaleX(0.9902);">@2023 MekongSoft. Thông tin hỗ trợ: 0901 000 508</span>
<div style="left:230px;top:148px;width:1460px;height:743px;border:4px solid #6e6e6e;background:#fff"></div>
<div class="h" style="left:234px;top:152px;width:1452px;height:25px;"></div>
<div style="left:234px;top:177px;width:1452px;height:0;border-top:1px dashed #707070"></div>
<svg style="left:236px;top:156px" width="16" height="16" viewBox="0 0 16 16"><rect width="16" height="16" rx="4" fill="#e8202a"/><path d="M3 2.8 L6.2 5.6 M5.2 4.6 L9.2 13 L12.6 6.2 M10.4 6.6 L13.4 5.6" stroke="#fff" stroke-width="1.7" fill="none" stroke-linecap="round"/></svg>
<span id="t122" class="t" style="left:256.00px;top:159.24px;font-size:12.48px;line-height:12.48px;font-weight:bold;transform:scaleX(0.9238);">Phiếu bán hàng</span>
<div style="left:1623px;top:165.5px;width:9.5px;height:2.8px;background:#111"></div>
<div style="left:1646px;top:160.8px;width:9.2px;height:7.6px;border:2px solid #111;border-radius:1px"></div>
<svg style="left:1668px;top:160px" width="11.5" height="9.2"><path d="M1.80 1.2 L9.70 8.00 M9.70 1.2 L1.80 8.00" stroke="#111" stroke-width="2.3"/></svg>
<svg style="left:243px;top:184px" width="18" height="16" viewBox="0 0 18 16"><g transform="translate(9,8) rotate(-42)"><rect x="-9.5" y="-3.6" width="19" height="7.2" rx="2.2" fill="#d8553a"/><rect x="-9.5" y="-3.6" width="8.5" height="7.2" rx="2.2" fill="#5a94d8"/><rect x="-1.5" y="-3.6" width="2" height="7.2" fill="#5a94d8"/><path d="M1.5 -3.6 V3.6 M5 -3.6 V3.6" stroke="#f8c8b8" stroke-width="0.8"/><path d="M-9 -1.5 H9" stroke="#fff" stroke-opacity="0.5" stroke-width="1"/></g></svg>
<span id="t123" class="t" style="left:264.00px;top:186.42px;font-size:14.04px;line-height:14.04px;color:#0000ff;font-weight:bold;transform:scaleX(1.0612);">Tạo mới (Ctrl + N)</span>
<div style="left:402.5px;top:181px;width:0;height:25px;border-left:1px dashed #d0d0d0"></div>
<div style="left:597.5px;top:181px;width:0;height:25px;border-left:1px dashed #d0d0d0"></div>
<div style="left:790.5px;top:181px;width:0;height:25px;border-left:1px dashed #d0d0d0"></div>
<div style="left:928px;top:181px;width:0;height:25px;border-left:1px dashed #d0d0d0"></div>
<svg style="left:414px;top:185px" width="16" height="16" viewBox="0 0 16 16"><circle cx="8" cy="8" r="7.3" fill="#4cbb3c" stroke="#2e8e22"/><path d="M8 3.8v8.4M3.8 8h8.4" stroke="#fff" stroke-width="2.6"/></svg>
<span id="t124" class="t" style="left:435.50px;top:186.42px;font-size:14.04px;line-height:14.04px;color:#0000ff;font-weight:bold;transform:scaleX(1.0595);">Thêm hàng hóa (F10)</span>
<svg style="left:609px;top:185px" width="16" height="16" viewBox="0 0 16 16"><circle cx="8" cy="8" r="7.3" fill="#4cbb3c" stroke="#2e8e22"/><path d="M8 3.8v8.4M3.8 8h8.4" stroke="#fff" stroke-width="2.6"/></svg>
<span id="t125" class="t" style="left:630.00px;top:186.42px;font-size:14.04px;line-height:14.04px;color:#0000ff;font-weight:bold;transform:scaleX(1.0569);">Thêm nhân viên(F11)</span>
<svg style="left:803px;top:185px" width="18" height="17" viewBox="0 0 18 17"><rect x="1" y="1" width="12" height="12" rx="1.2" fill="#3a4a6a"/><rect x="3.5" y="2" width="6.5" height="4" fill="#e8eef8"/><rect x="7.5" y="2.8" width="1.6" height="2" fill="#111"/><rect x="4" y="8" width="6" height="5" fill="#fff"/><rect x="4" y="11.3" width="6" height="1.7" fill="#4a90d8"/><path d="M10.4 7.5h3.4v4h2.6l-4.3 4.6-4.3-4.6h2.6z" fill="#7ab828" stroke="#3a6a10" stroke-width="0.9"/></svg>
<span id="t126" class="t" style="left:823.00px;top:186.42px;font-size:14.04px;line-height:14.04px;color:#0000ff;font-weight:bold;">Lưu giao diện</span>
<svg style="left:940px;top:185px" width="16" height="16" viewBox="0 0 16 16"><path d="M5 3 L1.5 6.5 L5 10" stroke="#2a70d0" stroke-width="2" fill="none"/><path d="M2 6.5 H9 A4.5 4.5 0 0 1 9 15.5 H7" stroke="#2a70d0" stroke-width="2" fill="none"/></svg>
<span id="t127" class="t" style="left:961.00px;top:186.42px;font-size:14.04px;line-height:14.04px;color:#0000ff;font-weight:bold;">Phục hồi giao diện</span>
<div class="h" style="left:234px;top:208px;width:921px;height:23px;border-top:1px dashed #c4c4c4;border-bottom:1px dashed #c4c4c4;border-right:1px dashed #c4c4c4"></div>
<span id="t128" class="t" style="left:247.00px;top:213.36px;font-size:13.52px;line-height:13.52px;font-weight:bold;transform:scaleX(1.0843);">THÔNG TIN PHIẾU BÁN HÀNG</span>
<div style="left:1154px;top:231px;width:0;height:600px;border-left:1px dashed #d0d0d0"></div>
<div style="left:234px;top:231px;width:0;height:600px;border-left:1px dashed #c8c8c8"></div>
<span id="t129" class="t" style="left:239.60px;top:243.22px;font-size:14.51px;line-height:14.51px;transform:scaleX(0.9173);">Ngày lập</span>
<div style="left:304px;top:237px;width:145px;height:24.5px;border:1px solid #adadad;background:#fff"></div>
<div style="left:308px;top:240px;width:89px;height:17.5px;background:#0a6ee0"></div>
<div style="left:306.5px;top:240px;width:1.5px;height:17.5px;background:#f08020"></div>
<span id="t130" class="t" style="left:309.00px;top:242.77px;font-size:14.56px;line-height:14.56px;color:#fff;font-weight:bold;transform:scaleX(1.1948);">25/10/2023</span>
<svg style="left:436.0px;top:248.0px" width="9" height="5"><path d="M0.5 0.5 L8.5 0.5 L4.5 4.5z" fill="#111"/></svg>
<span id="t131" class="t" style="left:455.00px;top:243.22px;font-size:14.51px;line-height:14.51px;transform:scaleX(0.9366);">Khách hàng</span>
<div style="left:533px;top:237px;width:178px;height:24.5px;border:1px solid #adadad;background:#fff"></div>
<div style="left:534px;top:238px;width:117px;height:22px;overflow:hidden"><span id="t132" class="t" style="left:3.00px;top:5.22px;font-size:14.51px;line-height:14.51px;transform:scaleX(0.9060);">NVS, Nguyễn Văn Sáng</span></div>
<svg style="left:657.5px;top:248.0px" width="9" height="5"><path d="M0.5 0.5 L8.5 0.5 L4.5 4.5z" fill="#111"/></svg>
<svg style="left:672px;top:242px" width="16" height="16" viewBox="0 0 16 16"><circle cx="8" cy="8" r="7.3" fill="#4cbb3c" stroke="#2e8e22"/><path d="M8 3.8v8.4M3.8 8h8.4" stroke="#fff" stroke-width="2.6"/></svg>
<svg style="left:692px;top:242px" width="16" height="15" viewBox="0 0 16 15"><path d="M3.6 8 C3.6 4.6 5.8 2.8 8.6 2.8 C10.2 2.8 11.2 3.3 12 4" stroke="#52b446" stroke-width="2.3" fill="none"/><path d="M0.2 6.8 L7 6.8 L3.6 11.6z" fill="#52b446"/><path d="M12.4 7 C12.4 10.4 10.2 12.2 7.4 12.2 C5.8 12.2 4.8 11.7 4 11" stroke="#52b446" stroke-width="2.3" fill="none"/><path d="M15.8 8.2 L9 8.2 L12.4 3.4z" fill="#52b446"/></svg>
<span id="t133" class="t" style="left:715.00px;top:243.22px;font-size:14.51px;line-height:14.51px;transform:scaleX(0.9525);">Công trình</span>
<div style="left:790.5px;top:237px;width:185.0px;height:24.5px;border:1px solid #adadad;background:#fff"></div>
<svg style="left:962.5px;top:248.0px" width="9" height="5"><path d="M0.5 0.5 L8.5 0.5 L4.5 4.5z" fill="#111"/></svg>
<span id="t134" class="t" style="left:980.00px;top:243.22px;font-size:14.51px;line-height:14.51px;transform:scaleX(0.8854);">T Nợ cũ</span>
<div style="left:1032px;top:237px;width:122px;height:24.5px;border:1px solid #adadad;border-right:none;background:#f3f3f3"></div>
<span id="t135" class="t" style="left:239.60px;top:272.22px;font-size:14.51px;line-height:14.51px;transform:scaleX(0.8800);">Mã phiếu</span>
<div style="left:304px;top:266px;width:145px;height:24.5px;border:1px solid #adadad;background:#f3f3f3"></div>
<span id="t136" class="t" style="left:308.00px;top:272.22px;font-size:14.51px;line-height:14.51px;transform:scaleX(0.9525);">PBH00002-251023</span>
<span id="t137" class="t" style="left:468.00px;top:272.22px;font-size:14.51px;line-height:14.51px;transform:scaleX(0.9585);">Họ và tên</span>
<div style="left:533px;top:266px;width:389.5px;height:24.5px;border:1px solid #adadad;background:#fff"></div>
<span id="t138" class="t" style="left:537.00px;top:272.22px;font-size:14.51px;line-height:14.51px;transform:scaleX(0.9261);">Nguyễn Văn Sáng</span>
<span id="t139" class="t" style="left:927.00px;top:272.22px;font-size:14.51px;line-height:14.51px;transform:scaleX(0.9381);">Ngày tới hạn nợ</span>
<div style="left:1030px;top:266px;width:124px;height:24.5px;border:1px solid #adadad;border-right:none;background:#fff"></div>
<span id="t140" class="t" style="left:239.60px;top:301.22px;font-size:14.51px;line-height:14.51px;transform:scaleX(0.8908);">Số phiếu</span>
<div style="left:304px;top:295px;width:145px;height:24.5px;border:1px solid #adadad;background:#fff"></div>
<span id="t141" class="t" style="left:487.50px;top:301.22px;font-size:14.51px;line-height:14.51px;transform:scaleX(0.9024);">Địa chỉ</span>
<div style="left:533px;top:295px;width:214.5px;height:24.5px;border:1px solid #adadad;background:#fff"></div>
<div style="left:534px;top:296px;width:211px;height:22px;overflow:hidden"><span id="t142" class="t" style="left:3.00px;top:5.22px;font-size:14.51px;line-height:14.51px;transform:scaleX(0.9488);">123 Nguyễn Văn Linh, Phường An Khánh</span></div>
<span id="t143" class="t" style="left:752.00px;top:301.22px;font-size:14.51px;line-height:14.51px;transform:scaleX(0.9402);">Ngày giao hàng</span>
<div style="left:855px;top:295px;width:120.5px;height:24.5px;border:1px solid #adadad;background:#fff"></div>
<svg style="left:962.5px;top:306.0px" width="9" height="5"><path d="M0.5 0.5 L8.5 0.5 L4.5 4.5z" fill="#111"/></svg>
<span id="t144" class="t" style="left:1000.00px;top:301.22px;font-size:14.51px;line-height:14.51px;transform:scaleX(0.8966);">SĐT</span>
<div style="left:1032px;top:295px;width:122px;height:24.5px;border:1px solid #adadad;border-right:none;background:#fff"></div>
<span id="t145" class="t" style="left:1036.00px;top:301.22px;font-size:14.51px;line-height:14.51px;transform:scaleX(0.9795);">0987654321</span>
<span id="t146" class="t" style="left:239.60px;top:330.22px;font-size:14.51px;line-height:14.51px;transform:scaleX(0.8701);">Người lập</span>
<div style="left:304px;top:324px;width:145px;height:24.5px;border:1px solid #adadad;background:#f3f3f3"></div>
<span id="t147" class="t" style="left:308.00px;top:330.22px;font-size:14.51px;line-height:14.51px;transform:scaleX(0.9453);">Administrator</span>
<span id="t148" class="t" style="left:482.00px;top:330.22px;font-size:14.51px;line-height:14.51px;transform:scaleX(0.9103);">Ghi chú</span>
<div style="left:533px;top:324px;width:214.5px;height:24.5px;border:1px solid #adadad;background:#fff"></div>
<span id="t149" class="t" style="left:537.00px;top:330.22px;font-size:14.51px;line-height:14.51px;transform:scaleX(0.9681);">KDH00005-251023_</span>
<span id="t150" class="t" style="left:752.00px;top:330.22px;font-size:14.51px;line-height:14.51px;transform:scaleX(0.9459);">Trạng thái giao</span>
<div style="left:855px;top:324px;width:120.5px;height:24.5px;border:1px solid #adadad;background:#fff"></div>
<span id="t151" class="t" style="left:859.00px;top:330.22px;font-size:14.51px;line-height:14.51px;transform:scaleX(0.8547);">CHƯA GIAO</span>
<svg style="left:962.5px;top:335.0px" width="9" height="5"><path d="M0.5 0.5 L8.5 0.5 L4.5 4.5z" fill="#111"/></svg>
<span id="t152" class="t" style="left:982.00px;top:330.22px;font-size:14.51px;line-height:14.51px;transform:scaleX(0.8662);">Loại giá</span>
<div style="left:1032px;top:324px;width:122px;height:24.5px;border:1px solid #adadad;border-right:none;background:#fff"></div>
<span id="t153" class="t" style="left:1036.00px;top:330.22px;font-size:14.51px;line-height:14.51px;transform:scaleX(0.8247);">Giá lẻ</span>
<span id="t154" class="t" style="left:752.00px;top:359.97px;font-size:14.51px;line-height:14.51px;transform:scaleX(0.9465);">Thầu phụ</span>
<div style="left:816.5px;top:353.75px;width:159.5px;height:24.5px;border:1px solid #adadad;background:#fff"></div>
<svg style="left:943.5px;top:364.2px" width="9" height="5"><path d="M0.5 0.5 L8.5 0.5 L4.5 4.5z" fill="#111"/></svg>
<svg style="left:958px;top:358.75px" width="16" height="15" viewBox="0 0 16 15"><path d="M3.6 8 C3.6 4.6 5.8 2.8 8.6 2.8 C10.2 2.8 11.2 3.3 12 4" stroke="#52b446" stroke-width="2.3" fill="none"/><path d="M0.2 6.8 L7 6.8 L3.6 11.6z" fill="#52b446"/><path d="M12.4 7 C12.4 10.4 10.2 12.2 7.4 12.2 C5.8 12.2 4.8 11.7 4 11" stroke="#52b446" stroke-width="2.3" fill="none"/><path d="M15.8 8.2 L9 8.2 L12.4 3.4z" fill="#52b446"/></svg>
<span id="t155" class="t" style="left:981.00px;top:359.97px;font-size:14.51px;line-height:14.51px;transform:scaleX(0.8458);">NV Sale</span>
<div style="left:1033px;top:353.75px;width:121px;height:24.5px;border:1px solid #adadad;border-right:none;background:#fff"></div>
<div style="left:242px;top:382px;width:84px;height:29px;border:1px solid #b4b4b4;border-bottom:none;background:#fff"></div>
<span id="t156" class="t" style="left:252.00px;top:390.37px;font-size:13.97px;line-height:13.97px;transform:scaleX(0.8737);">HÀNG BÁN</span>
<div style="left:240px;top:410px;width:915px;height:291px;border:1px solid #a8a8a8;border-right:none;background:#fff"></div>
<div class="h" style="left:241px;top:411px;width:913px;height:39px;"></div>
<div style="left:240px;top:450px;width:914px;height:1px;background:#c0c0c0"></div>
<div style="left:270px;top:411px;width:1px;height:144px;background:#c8c8c8"></div>
<div style="left:491px;top:411px;width:1px;height:144px;background:#c8c8c8"></div>
<div style="left:579px;top:411px;width:1px;height:144px;background:#c8c8c8"></div>
<div style="left:618px;top:411px;width:1px;height:144px;background:#c8c8c8"></div>
<div style="left:679px;top:411px;width:1px;height:144px;background:#c8c8c8"></div>
<div style="left:750px;top:411px;width:1px;height:144px;background:#c8c8c8"></div>
<div style="left:815px;top:411px;width:1px;height:144px;background:#c8c8c8"></div>
<div style="left:907px;top:411px;width:1px;height:144px;background:#c8c8c8"></div>
<div style="left:975px;top:411px;width:1px;height:144px;background:#c8c8c8"></div>
<div style="left:1043px;top:411px;width:1px;height:144px;background:#c8c8c8"></div>
<div style="left:1111px;top:411px;width:1px;height:144px;background:#c8c8c8"></div>
<span id="t157" class="t" style="left:352.52px;top:423.90px;font-size:13.0px;line-height:13.0px;font-weight:bold;transform:scaleX(0.9615);">Hàng hóa</span>
<span id="t158" class="t" style="left:512.34px;top:423.90px;font-size:13.0px;line-height:13.0px;font-weight:bold;transform:scaleX(0.9615);">Ghi chú</span>
<span id="t159" class="t" style="left:586.70px;top:423.90px;font-size:13.0px;line-height:13.0px;font-weight:bold;transform:scaleX(0.9615);">ĐVT</span>
<span id="t160" class="t" style="left:691.46px;top:423.90px;font-size:13.0px;line-height:13.0px;font-weight:bold;transform:scaleX(0.9615);">Đơn giá</span>
<span id="t161" class="t" style="left:832.68px;top:423.90px;font-size:13.0px;line-height:13.0px;font-weight:bold;transform:scaleX(0.9615);">Kho hàng</span>
<span id="t162" class="t" style="left:641.01px;top:416.00px;font-size:13.0px;line-height:13.0px;font-weight:bold;transform:scaleX(0.9615);">Số</span>
<span id="t163" class="t" style="left:630.66px;top:431.90px;font-size:13.0px;line-height:13.0px;font-weight:bold;transform:scaleX(0.9615);">lượng</span>
<span id="t164" class="t" style="left:764.25px;top:416.00px;font-size:13.0px;line-height:13.0px;font-weight:bold;transform:scaleX(0.9615);">Thành</span>
<span id="t165" class="t" style="left:771.88px;top:431.90px;font-size:13.0px;line-height:13.0px;font-weight:bold;transform:scaleX(0.9615);">tiền</span>
<span id="t166" class="t" style="left:925.28px;top:416.00px;font-size:13.0px;line-height:13.0px;font-weight:bold;transform:scaleX(0.9615);">CK %</span>
<span id="t167" class="t" style="left:913.13px;top:431.90px;font-size:13.0px;line-height:13.0px;font-weight:bold;transform:scaleX(0.9615);">Thầu Phụ</span>
<span id="t168" class="t" style="left:985.99px;top:416.00px;font-size:13.0px;line-height:13.0px;font-weight:bold;transform:scaleX(0.9615);">CK Tiền</span>
<span id="t169" class="t" style="left:981.03px;top:431.90px;font-size:13.0px;line-height:13.0px;font-weight:bold;transform:scaleX(0.9615);">Thầu Phụ</span>
<span id="t170" class="t" style="left:1061.18px;top:416.00px;font-size:13.0px;line-height:13.0px;font-weight:bold;transform:scaleX(0.9615);">CK %</span>
<span id="t171" class="t" style="left:1064.64px;top:431.90px;font-size:13.0px;line-height:13.0px;font-weight:bold;transform:scaleX(0.9615);">Sale</span>
<div style="left:1112px;top:411px;width:42px;height:39px;overflow:hidden"><span id="t172" class="t" style="left:13.49px;top:5.00px;font-size:13.0px;line-height:13.0px;font-weight:bold;transform:scaleX(0.9615);">CK Tiền</span></div>
<div style="left:1112px;top:411px;width:42px;height:39px;overflow:hidden"><span id="t173" class="t" style="left:24.14px;top:20.90px;font-size:13.0px;line-height:13.0px;font-weight:bold;transform:scaleX(0.9615);">Sale</span></div>
<div class="h" style="left:241px;top:451px;width:30px;height:104px;"></div>
<div style="left:271px;top:451px;width:220px;height:25px;background:linear-gradient(to right,#ffff00,#ffffc8)"></div>
<div style="left:492px;top:451px;width:662px;height:25px;background:#f2f2f2"></div>
<div style="left:751px;top:477px;width:64px;height:77px;background:#eefeff"></div>
<div style="left:241px;top:476px;width:913px;height:1px;background:#cfcfcf"></div>
<div style="left:241px;top:502px;width:913px;height:1px;background:#cfcfcf"></div>
<div style="left:241px;top:528px;width:913px;height:1px;background:#cfcfcf"></div>
<div style="left:241px;top:554px;width:913px;height:1px;background:#cfcfcf"></div>
<div style="left:270px;top:451px;width:1px;height:104px;background:#d4d4d4"></div>
<div style="left:491px;top:451px;width:1px;height:104px;background:#d4d4d4"></div>
<div style="left:579px;top:451px;width:1px;height:104px;background:#d4d4d4"></div>
<div style="left:618px;top:451px;width:1px;height:104px;background:#d4d4d4"></div>
<div style="left:679px;top:451px;width:1px;height:104px;background:#d4d4d4"></div>
<div style="left:750px;top:451px;width:1px;height:104px;background:#d4d4d4"></div>
<div style="left:815px;top:451px;width:1px;height:104px;background:#d4d4d4"></div>
<div style="left:907px;top:451px;width:1px;height:104px;background:#d4d4d4"></div>
<div style="left:975px;top:451px;width:1px;height:104px;background:#d4d4d4"></div>
<div style="left:1043px;top:451px;width:1px;height:104px;background:#d4d4d4"></div>
<div style="left:1111px;top:451px;width:1px;height:104px;background:#d4d4d4"></div>
<svg style="left:246px;top:459px" width="5" height="9"><path d="M0.5 0.5 L4.5 4.5 L0.5 8.5z" fill="#111"/></svg>
<span id="t174" class="t" style="left:255.00px;top:457.66px;font-size:13.52px;line-height:13.52px;font-weight:bold;transform:scaleX(0.9615);">1</span>
<span id="t175" class="t" style="left:251.38px;top:483.66px;font-size:13.52px;line-height:13.52px;font-weight:bold;transform:scaleX(0.9615);">2</span>
<span id="t176" class="t" style="left:251.38px;top:509.66px;font-size:13.52px;line-height:13.52px;font-weight:bold;transform:scaleX(0.9615);">3</span>
<span id="t177" class="t" style="left:245.00px;top:534.21px;font-size:16.64px;line-height:16.64px;color:#111;font-weight:bold;transform:scaleX(0.9615);">*</span>
<span id="t178" class="t" style="left:256.00px;top:534.74px;font-size:12.48px;line-height:12.48px;color:#111;font-weight:bold;transform:scaleX(0.9615);">-</span>
<span id="t179" class="t" style="left:275.40px;top:456.77px;font-size:14.56px;line-height:14.56px;color:#ff0000;font-weight:bold;transform:scaleX(1.0662);">BM21, TenHangHoa</span>
<svg style="left:477.5px;top:462.0px" width="9" height="5"><path d="M0.5 0.5 L8.5 0.5 L4.5 4.5z" fill="#111"/></svg>
<span id="t180" class="t" style="left:275.00px;top:483.22px;font-size:14.51px;line-height:14.51px;transform:scaleX(1.0243);">BM34, Ống 27x1.8mm BM</span>
<span id="t181" class="t" style="left:275.00px;top:509.22px;font-size:14.51px;line-height:14.51px;transform:scaleX(1.0243);">BM60, Ống 49x2.4mm BM</span>
<span id="t182" class="t" style="left:584.00px;top:457.22px;font-size:14.51px;line-height:14.51px;transform:scaleX(1.0756);">met</span>
<span id="t183" class="t" style="left:654.55px;top:457.22px;font-size:14.51px;line-height:14.51px;transform:scaleX(1.0140);">10.</span>
<span id="t184" class="t" style="left:709.80px;top:457.22px;font-size:14.51px;line-height:14.51px;transform:scaleX(1.0140);">6,820</span>
<span id="t185" class="t" style="left:757.20px;top:456.33px;font-size:15.08px;line-height:15.08px;font-weight:bold;transform:scaleX(1.1664);">68,200</span>
<span id="t186" class="t" style="left:820.30px;top:457.22px;font-size:14.51px;line-height:14.51px;transform:scaleX(0.9493);">Kho chính</span>
<span id="t187" class="t" style="left:958.94px;top:457.22px;font-size:14.51px;line-height:14.51px;transform:scaleX(1.0140);">0.</span>
<span id="t188" class="t" style="left:1031.31px;top:457.22px;font-size:14.51px;line-height:14.51px;transform:scaleX(1.0140);">0</span>
<span id="t189" class="t" style="left:1094.84px;top:457.22px;font-size:14.51px;line-height:14.51px;transform:scaleX(1.0140);">0.</span>
<span id="t190" class="t" style="left:584.00px;top:483.22px;font-size:14.51px;line-height:14.51px;transform:scaleX(1.0756);">met</span>
<span id="t191" class="t" style="left:662.74px;top:483.22px;font-size:14.51px;line-height:14.51px;transform:scaleX(1.0140);">2.</span>
<span id="t192" class="t" style="left:701.62px;top:483.22px;font-size:14.51px;line-height:14.51px;transform:scaleX(1.0140);">13,530</span>
<span id="t193" class="t" style="left:757.20px;top:482.33px;font-size:15.08px;line-height:15.08px;font-weight:bold;transform:scaleX(1.1664);">27,060</span>
<span id="t194" class="t" style="left:820.30px;top:483.22px;font-size:14.51px;line-height:14.51px;transform:scaleX(0.9493);">Kho chính</span>
<span id="t195" class="t" style="left:958.94px;top:483.22px;font-size:14.51px;line-height:14.51px;transform:scaleX(1.0140);">0.</span>
<span id="t196" class="t" style="left:1031.31px;top:483.22px;font-size:14.51px;line-height:14.51px;transform:scaleX(1.0140);">0</span>
<span id="t197" class="t" style="left:1094.84px;top:483.22px;font-size:14.51px;line-height:14.51px;transform:scaleX(1.0140);">0.</span>
<span id="t198" class="t" style="left:584.00px;top:509.22px;font-size:14.51px;line-height:14.51px;transform:scaleX(1.0756);">met</span>
<span id="t199" class="t" style="left:662.74px;top:509.22px;font-size:14.51px;line-height:14.51px;transform:scaleX(1.0140);">3.</span>
<span id="t200" class="t" style="left:701.62px;top:509.22px;font-size:14.51px;line-height:14.51px;transform:scaleX(1.0140);">24,860</span>
<span id="t201" class="t" style="left:757.20px;top:508.33px;font-size:15.08px;line-height:15.08px;font-weight:bold;transform:scaleX(1.1664);">74,580</span>
<span id="t202" class="t" style="left:820.30px;top:509.22px;font-size:14.51px;line-height:14.51px;transform:scaleX(0.9493);">Kho chính</span>
<span id="t203" class="t" style="left:958.94px;top:509.22px;font-size:14.51px;line-height:14.51px;transform:scaleX(1.0140);">0.</span>
<span id="t204" class="t" style="left:1031.31px;top:509.22px;font-size:14.51px;line-height:14.51px;transform:scaleX(1.0140);">0</span>
<span id="t205" class="t" style="left:1094.84px;top:509.22px;font-size:14.51px;line-height:14.51px;transform:scaleX(1.0140);">0.</span>
<svg style="left:982px;top:503px" width="12" height="19"><path d="M0.5 0.5 L0.5 15 L4 11.5 L6.5 17.5 L8.5 16.5 L6 10.8 L10.8 10.8z" fill="#fff" stroke="#111" stroke-width="1"/></svg>
<div class="h" style="left:241px;top:664.5px;width:913px;height:36px;border-top:1px solid #a8a8a8"></div>
<div style="left:752px;top:667px;width:63px;height:29px;border:1px dashed #cfcfcf;background:#fff"></div>
<span id="t206" class="t" style="left:761.00px;top:675.57px;font-size:14.56px;line-height:14.56px;color:#ff0000;font-weight:bold;transform:scaleX(1.1944);">169,...</span>
<div style="left:240px;top:699px;width:915px;height:2px;background:#a8a8a8"></div>
<span id="t207" class="t" style="left:239.00px;top:714.17px;font-size:14.51px;line-height:14.51px;transform:scaleX(0.9565);">% Chiết khấu</span>
<div style="left:352.5px;top:708.25px;width:121.75px;height:24.25px;border:1px solid #adadad;background:#fff"></div>
<span id="t208" class="t" style="left:459.58px;top:713.72px;font-size:14.56px;line-height:14.56px;color:#0000ff;font-weight:bold;transform:scaleX(0.9615);">0.</span>
<span id="t209" class="t" style="left:479.25px;top:714.17px;font-size:14.51px;line-height:14.51px;transform:scaleX(0.9331);">Tiền chiết khấu</span>
<div style="left:579.25px;top:708.25px;width:49.0px;height:24.25px;border:1px solid #adadad;background:#fff"></div>
<span id="t210" class="t" style="left:617.22px;top:713.72px;font-size:14.56px;line-height:14.56px;color:#0000ff;font-weight:bold;transform:scaleX(0.9615);">0</span>
<span id="t211" class="t" style="left:633.00px;top:714.17px;font-size:14.51px;line-height:14.51px;transform:scaleX(0.9855);">% Thuế</span>
<div style="left:688.25px;top:708.25px;width:49.25px;height:24.25px;border:1px solid #adadad;background:#fff"></div>
<span id="t212" class="t" style="left:722.08px;top:713.72px;font-size:14.56px;line-height:14.56px;color:#0000ff;font-weight:bold;transform:scaleX(0.9615);">0.</span>
<span id="t213" class="t" style="left:783.25px;top:714.17px;font-size:14.51px;line-height:14.51px;transform:scaleX(0.9471);">Tiền thuế</span>
<div style="left:845.5px;top:708.25px;width:102.75px;height:24.25px;border:1px solid #adadad;background:#f3f3f3"></div>
<span id="t214" class="t" style="left:936.72px;top:713.72px;font-size:14.56px;line-height:14.56px;color:#0000ff;font-weight:bold;transform:scaleX(0.9615);">0</span>
<span id="t215" class="t" style="left:957.50px;top:714.17px;font-size:14.51px;line-height:14.51px;transform:scaleX(0.9429);">Trọng lượng (Kg)</span>
<div style="left:1068.25px;top:708.25px;width:86px;height:24.25px;border:1px solid #adadad;border-right:none;background:#f3f3f3"></div>
<span id="t216" class="t" style="left:239.00px;top:743.42px;font-size:14.51px;line-height:14.51px;transform:scaleX(0.9594);">Tổng cộng</span>
<div style="left:352.5px;top:737.5px;width:121.75px;height:24.25px;border:1px solid #adadad;background:#f3f3f3"></div>
<span id="t217" class="t" style="left:412.00px;top:742.97px;font-size:14.56px;line-height:14.56px;color:#ff0000;font-weight:bold;transform:scaleX(1.1028);">169,840</span>
<div style="left:479.25px;top:737.5px;width:258.25px;height:24.25px;border:1px solid #adadad;background:#f3f3f3"></div>
<div style="left:480px;top:738.5px;width:257px;height:22px;overflow:hidden"><span id="t218" class="t" style="left:3.25px;top:4.72px;font-size:14.51px;line-height:14.51px;transform:scaleX(0.9749);">Một trăm sáu mươi chín nghìn tám trăm linh bốn mươi đồng</span></div>
<span id="t219" class="t" style="left:745.00px;top:743.42px;font-size:14.51px;line-height:14.51px;transform:scaleX(0.9503);">Phí vận chuyển</span>
<div style="left:845.5px;top:737.5px;width:102.75px;height:24.25px;border:1px solid #adadad;background:#fff"></div>
<span id="t220" class="t" style="left:936.72px;top:742.97px;font-size:14.56px;line-height:14.56px;color:#0000ff;font-weight:bold;transform:scaleX(0.9615);">0</span>
<span id="t221" class="t" style="left:953.00px;top:743.42px;font-size:14.51px;line-height:14.51px;transform:scaleX(0.9437);">Tổng tiền sau phí</span>
<div style="left:1068.25px;top:737.5px;width:86px;height:24.25px;border:1px solid #adadad;border-right:none;background:#fff"></div>
<div style="left:1069px;top:738.5px;width:85px;height:22px;overflow:hidden"><span id="t222" class="t" style="left:61.00px;top:4.47px;font-size:14.56px;line-height:14.56px;color:#ff0000;font-weight:bold;transform:scaleX(0.9615);">169,840</span></div>
<span id="t223" class="t" style="left:239.00px;top:772.17px;font-size:14.51px;line-height:14.51px;transform:scaleX(0.9594);">Thanh toán (F12)</span>
<div style="left:352.5px;top:766.25px;width:121.75px;height:24.25px;border:1px solid #adadad;background:#fff"></div>
<span id="t224" class="t" style="left:462.22px;top:771.72px;font-size:14.56px;line-height:14.56px;color:#0000ff;font-weight:bold;transform:scaleX(0.9615);">0</span>
<span id="t225" class="t" style="left:503.00px;top:772.17px;font-size:14.51px;line-height:14.51px;transform:scaleX(0.9683);">Quỹ</span>
<div style="left:534.25px;top:766.25px;width:414.0px;height:24.25px;border:1px solid #adadad;background:#fff"></div>
<svg style="left:935.5px;top:776.8px" width="9" height="5"><path d="M0.5 0.5 L8.5 0.5 L4.5 4.5z" fill="#111"/></svg>
<span id="t226" class="t" style="left:1018.00px;top:772.17px;font-size:14.51px;line-height:14.51px;transform:scaleX(0.9232);">Còn nợ</span>
<div style="left:1068.25px;top:766.25px;width:86px;height:24.25px;border:1px solid #adadad;border-right:none;background:#f3f3f3"></div>
<div style="left:1069px;top:767.25px;width:85px;height:22px;overflow:hidden"><span id="t227" class="t" style="left:61.00px;top:4.47px;font-size:14.56px;line-height:14.56px;color:#0000ff;font-weight:bold;transform:scaleX(0.9615);">169,840</span></div>
<div style="left:600px;top:795px;width:554px;height:16px;overflow:hidden"><span id="t228" class="t" style="left:87.50px;top:2.18px;font-size:11.96px;line-height:11.96px;font-weight:bold;transform:scaleX(0.9880);">***** Lưu ý: Trong nút In: KCN là viết tắt của &quot;Không công nợ&quot;. Hiểu là In không có</span></div>
<div style="left:234px;top:812px;width:20px;height:0;border-top:1px dashed #c8c8c8"></div>
<svg style="left:241px;top:816px" width="6" height="9"><path d="M5 0.5 L0.8 4.5 L5 8.5z" fill="#111"/></svg>
<div class="h" style="left:253px;top:812.5px;width:846px;height:15px;border:1px solid #c8c8c8"></div>
<svg style="left:1142px;top:816px" width="6" height="9"><path d="M0.8 0.5 L5 4.5 L0.8 8.5z" fill="#111"/></svg>
<div style="left:234px;top:830px;width:921px;height:0;border-top:1px dashed #c8c8c8"></div>
<div style="left:234px;top:831px;width:774px;height:1px;background:#b8b8b8"></div>
<div class="h" style="left:234px;top:832px;width:774px;height:51px;border-bottom:1px solid #c0c0c0"></div>
<div style="left:234px;top:883px;width:774px;height:1px;background:#c8c8c8"></div>
<div style="left:350.5px;top:838px;width:0;height:38px;border-left:1px dashed #c8c8c8"></div>
<svg style="left:245px;top:841px" width="30" height="30" viewBox="0 0 30 30"><rect x="1" y="6" width="22" height="23" rx="2" fill="#3a4a78" stroke="#222c4a"/><rect x="5" y="7" width="13" height="8" fill="#c8d0e0"/><rect x="4" y="19" width="16" height="9" fill="#fff"/><rect x="4" y="24" width="16" height="4" fill="#7ab0e8"/><path d="M14 6 h8 v-5 l7 7.5 l-7 7.5 v-5 h-8z" fill="#6ac83a" stroke="#3a8a22"/></svg>
<span id="t229" class="t" style="left:279.25px;top:850.02px;font-size:14.04px;line-height:14.04px;color:#0000ff;font-weight:bold;transform:scaleX(1.0214);">LƯU (F2)</span>
<div style="left:365px;top:850px;width:13px;height:13px;border:1px solid #8a8a8a;background:#fff"></div>
<span id="t230" class="t" style="left:379.50px;top:850.02px;font-size:14.04px;line-height:14.04px;color:#0000ff;font-weight:bold;transform:scaleX(1.0460);">LƯU IN</span>
<svg style="left:442px;top:841px" width="32" height="32" viewBox="0 0 32 32"><rect x="7" y="3.5" width="14" height="12" fill="#eef2f8" stroke="#8a9ab8"/><rect x="1.5" y="13" width="28" height="13" rx="3" fill="#dfe6f0" stroke="#7a8aa8"/><rect x="5" y="14.5" width="20" height="5" rx="2" fill="#4a5a78"/><rect x="7" y="22" width="16" height="8" fill="#fff" stroke="#7a8aa8"/><rect x="9" y="24" width="12" height="4" fill="#6aaee8"/><circle cx="23.5" cy="8" r="7" fill="#7ab832" stroke="#4a8a1a"/><text x="20.2" y="12.2" font-size="11" font-weight="bold" fill="#203010" font-family="Liberation Sans">?</text></svg>
<span id="t231" class="t" style="left:478.25px;top:850.02px;font-size:14.04px;line-height:14.04px;color:#0000ff;font-weight:bold;transform:scaleX(1.1313);">IN A4 (F6)</span>
<svg style="left:565px;top:841px" width="32" height="32" viewBox="0 0 32 32"><rect x="7" y="3.5" width="14" height="12" fill="#eef2f8" stroke="#8a9ab8"/><rect x="1.5" y="13" width="28" height="13" rx="3" fill="#dfe6f0" stroke="#7a8aa8"/><rect x="5" y="14.5" width="20" height="5" rx="2" fill="#4a5a78"/><rect x="7" y="22" width="16" height="8" fill="#fff" stroke="#7a8aa8"/><rect x="9" y="24" width="12" height="4" fill="#6aaee8"/><circle cx="23.5" cy="8" r="7" fill="#7ab832" stroke="#4a8a1a"/><text x="20.2" y="12.2" font-size="11" font-weight="bold" fill="#203010" font-family="Liberation Sans">?</text></svg>
<span id="t232" class="t" style="left:600.75px;top:850.02px;font-size:14.04px;line-height:14.04px;color:#0000ff;font-weight:bold;transform:scaleX(1.0798);">IN A4KCN</span>
<div style="left:689px;top:850px;width:13px;height:13px;border:1px solid #8a8a8a;background:#fff"></div>
<svg style="left:689px;top:848px" width="14" height="15"><path d="M2 8 L5.5 12.5 L12 1" stroke="#111" stroke-width="1.6" fill="none"/></svg>
<span id="t233" class="t" style="left:703.00px;top:850.02px;font-size:14.04px;line-height:14.04px;font-weight:bold;transform:scaleX(1.0860);">XEM IN</span>
<svg style="left:771px;top:844px" width="26" height="26" viewBox="0 0 26 26"><path d="M3 7 L7 3 L13 9 L19 3 L23 7 L17 13 L23 19 L19 23 L13 17 L7 23 L3 19 L9 13z" fill="#e03a3a" stroke="#a02020" stroke-linejoin="round"/></svg>
<span id="t234" class="t" style="left:803.75px;top:850.02px;font-size:14.04px;line-height:14.04px;color:#ff0000;font-weight:bold;transform:scaleX(1.0242);">THOÁT</span>
<svg style="left:867px;top:841px" width="32" height="32" viewBox="0 0 32 32"><rect x="7" y="3.5" width="14" height="12" fill="#eef2f8" stroke="#8a9ab8"/><rect x="1.5" y="13" width="28" height="13" rx="3" fill="#dfe6f0" stroke="#7a8aa8"/><rect x="5" y="14.5" width="20" height="5" rx="2" fill="#4a5a78"/><rect x="7" y="22" width="16" height="8" fill="#fff" stroke="#7a8aa8"/><rect x="9" y="24" width="12" height="4" fill="#6aaee8"/><circle cx="23.5" cy="8" r="7" fill="#7ab832" stroke="#4a8a1a"/><text x="20.2" y="12.2" font-size="11" font-weight="bold" fill="#203010" font-family="Liberation Sans">?</text></svg>
<span id="t235" class="t" style="left:902.50px;top:850.02px;font-size:14.04px;line-height:14.04px;color:#0000ff;font-weight:bold;transform:scaleX(1.0553);">IN XUẤT KHO</span>
<div style="left:1158px;top:211px;width:526px;height:617px;border:3px solid #a8a8a8;background:#fff"></div>
<span id="t236" class="t" style="left:1166.30px;top:220.08px;font-size:11.96px;line-height:11.96px;color:#8c8c8c;font-weight:bold;transform:scaleX(0.8989);">DANH SÁCH PHIẾU</span>
<svg style="left:1642px;top:221.5px" width="8" height="9"><rect x="1.5" y="0.5" width="5" height="5" fill="#111"/><rect x="0" y="5" width="8" height="1.4" fill="#111"/><path d="M3.8 6v3" stroke="#111" stroke-width="1.2"/></svg>
<svg style="left:1663px;top:221px" width="11.5" height="9"><path d="M1.80 1.2 L9.70 7.80 M9.70 1.2 L1.80 7.80" stroke="#111" stroke-width="2.3"/></svg>
<div style="left:1161px;top:236.5px;width:519px;height:0;border-top:1px dashed #c8c8c8"></div>
<span id="t237" class="t" style="left:1165.00px;top:246.72px;font-size:14.51px;line-height:14.51px;transform:scaleX(0.9547);">Từ ngày</span>
<span id="t238" class="t" style="left:1423.00px;top:246.72px;font-size:14.51px;line-height:14.51px;transform:scaleX(0.9649);">Đến ngày</span>
<div style="left:1165px;top:267.4px;width:253.4000000000001px;height:23.200000000000045px;border:1px solid #adadad;background:#fff"></div>
<span id="t239" class="t" style="left:1169.50px;top:272.42px;font-size:14.51px;line-height:14.51px;transform:scaleX(1.0058);">25/10/2023</span>
<svg style="left:1405.5px;top:277.0px" width="9" height="5"><path d="M0.5 0.5 L8.5 0.5 L4.5 4.5z" fill="#111"/></svg>
<div style="left:1423px;top:267.4px;width:252.5999999999999px;height:23.200000000000045px;border:1px solid #adadad;background:#fff"></div>
<span id="t240" class="t" style="left:1427.00px;top:272.42px;font-size:14.51px;line-height:14.51px;transform:scaleX(1.0058);">25/10/2023</span>
<svg style="left:1662.5px;top:277.0px" width="9" height="5"><path d="M0.5 0.5 L8.5 0.5 L4.5 4.5z" fill="#111"/></svg>
<span id="t241" class="t" style="left:1165.00px;top:301.72px;font-size:14.51px;line-height:14.51px;transform:scaleX(0.9327);">Khách hàng</span>
<div style="left:1245.4px;top:295.5px;width:430.1999999999998px;height:23.100000000000023px;border:1px solid #adadad;background:#fff"></div>
<svg style="left:1642.5px;top:305.0px" width="9" height="5"><path d="M0.5 0.5 L8.5 0.5 L4.5 4.5z" fill="#111"/></svg>
<svg style="left:1657px;top:300px" width="16" height="15" viewBox="0 0 16 15"><path d="M3.6 8 C3.6 4.6 5.8 2.8 8.6 2.8 C10.2 2.8 11.2 3.3 12 4" stroke="#52b446" stroke-width="2.3" fill="none"/><path d="M0.2 6.8 L7 6.8 L3.6 11.6z" fill="#52b446"/><path d="M12.4 7 C12.4 10.4 10.2 12.2 7.4 12.2 C5.8 12.2 4.8 11.7 4 11" stroke="#52b446" stroke-width="2.3" fill="none"/><path d="M15.8 8.2 L9 8.2 L12.4 3.4z" fill="#52b446"/></svg>
<span id="t242" class="t" style="left:1165.00px;top:331.82px;font-size:14.51px;line-height:14.51px;transform:scaleX(0.8763);">Người lập</span>
<div style="left:1245.4px;top:325.3px;width:430.1999999999998px;height:23.099999999999966px;border:1px solid #adadad;background:#fff"></div>
<svg style="left:1642.5px;top:335.0px" width="9" height="5"><path d="M0.5 0.5 L8.5 0.5 L4.5 4.5z" fill="#111"/></svg>
<svg style="left:1657px;top:330px" width="16" height="15" viewBox="0 0 16 15"><path d="M3.6 8 C3.6 4.6 5.8 2.8 8.6 2.8 C10.2 2.8 11.2 3.3 12 4" stroke="#52b446" stroke-width="2.3" fill="none"/><path d="M0.2 6.8 L7 6.8 L3.6 11.6z" fill="#52b446"/><path d="M12.4 7 C12.4 10.4 10.2 12.2 7.4 12.2 C5.8 12.2 4.8 11.7 4 11" stroke="#52b446" stroke-width="2.3" fill="none"/><path d="M15.8 8.2 L9 8.2 L12.4 3.4z" fill="#52b446"/></svg>
<span id="t243" class="t" style="left:1165.00px;top:361.34px;font-size:12.36px;line-height:12.36px;transform:scaleX(0.8732);">(Màu xanh là đặt hàng chuyển qua)</span>
<div class="h" style="left:1585.4px;top:354.2px;width:90.2px;height:23.5px;border:1px solid #b4b4b4"></div>
<svg style="left:1589px;top:358px" width="16" height="16"><circle cx="6" cy="6" r="4.3" stroke="#222" stroke-width="2" fill="none"/><path d="M9 9 L14 14" stroke="#222" stroke-width="2.8"/></svg>
<span id="t244" class="t" style="left:1609.00px;top:359.97px;font-size:14.56px;line-height:14.56px;color:#0000ff;font-weight:bold;transform:scaleX(0.9514);">Tìm kiếm</span>
<div style="left:1165px;top:382.6px;width:511px;height:437.4px;border:1px solid #a8a8a8;background:#fff"></div>
<div class="h" style="left:1166px;top:383.6px;width:509px;height:22px;"></div>
<div style="left:1165px;top:405.5px;width:511px;height:1px;background:#c4c4c4"></div>
<div style="left:1165px;top:433px;width:511px;height:2px;background:#a8a8a8"></div>
<div style="left:1187.2px;top:383.6px;width:1px;height:50px;background:#c4c4c4"></div>
<div style="left:1278.3px;top:383.6px;width:1px;height:50px;background:#c4c4c4"></div>
<div style="left:1381.5px;top:383.6px;width:1px;height:50px;background:#c4c4c4"></div>
<div style="left:1536.1px;top:383.6px;width:1px;height:50px;background:#c4c4c4"></div>
<div style="left:1611.2px;top:383.6px;width:1px;height:50px;background:#c4c4c4"></div>
<span id="t245" class="t" style="left:1192.10px;top:386.22px;font-size:14.04px;line-height:14.04px;font-weight:bold;transform:scaleX(0.9353);">Ngày lập</span>
<span id="t246" class="t" style="left:1283.50px;top:386.22px;font-size:14.04px;line-height:14.04px;font-weight:bold;transform:scaleX(0.9373);">Mã phiếu</span>
<span id="t247" class="t" style="left:1386.30px;top:386.22px;font-size:14.04px;line-height:14.04px;font-weight:bold;transform:scaleX(0.9278);">Khách hàng</span>
<span id="t248" class="t" style="left:1541.60px;top:386.22px;font-size:14.04px;line-height:14.04px;font-weight:bold;transform:scaleX(0.9392);">Tổng tiền</span>
<div style="left:1612px;top:384px;width:63px;height:21px;overflow:hidden"><span id="t249" class="t" style="left:4.30px;top:2.22px;font-size:14.04px;line-height:14.04px;font-weight:bold;transform:scaleX(0.8846);">Mã khách hàng</span></div>
<svg style="left:1170px;top:413px" width="8" height="11"><circle cx="4" cy="3.5" r="2.6" fill="#111"/><path d="M4 5v5" stroke="#111" stroke-width="1.3"/></svg>
<div style="left:1196px;top:418px;width:9px;height:1px;background:#777"></div>
<div style="left:1196px;top:421px;width:9px;height:1px;background:#777"></div>
<svg style="left:1284px;top:414px" width="18" height="12"><text x="0" y="9.5" font-size="8" fill="#555" font-family="Liberation Mono">A</text><rect x="5.5" y="0.5" width="6" height="10.5" fill="#1a9a2a"/><text x="6.2" y="9" font-size="8" fill="#fff" font-family="Liberation Mono">B</text><text x="12" y="9.5" font-size="8" fill="#555" font-family="Liberation Mono">C</text></svg>
<svg style="left:1387px;top:414px" width="18" height="12"><text x="0" y="9.5" font-size="8" fill="#555" font-family="Liberation Mono">A</text><rect x="5.5" y="0.5" width="6" height="10.5" fill="#1a9a2a"/><text x="6.2" y="9" font-size="8" fill="#fff" font-family="Liberation Mono">B</text><text x="12" y="9.5" font-size="8" fill="#555" font-family="Liberation Mono">C</text></svg>
<div style="left:1545px;top:418px;width:9px;height:1px;background:#777"></div>
<div style="left:1545px;top:421px;width:9px;height:1px;background:#777"></div>
<svg style="left:1616px;top:414px" width="18" height="12"><text x="0" y="9.5" font-size="8" fill="#555" font-family="Liberation Mono">A</text><rect x="5.5" y="0.5" width="6" height="10.5" fill="#1a9a2a"/><text x="6.2" y="9" font-size="8" fill="#fff" font-family="Liberation Mono">B</text><text x="12" y="9.5" font-size="8" fill="#555" font-family="Liberation Mono">C</text></svg>
<div class="h" style="left:1166px;top:435px;width:21px;height:140px;"></div>
<div style="left:1188px;top:435px;width:90.3px;height:27.8px;background:linear-gradient(to right,#ffff00,#ffffc8)"></div>
<div style="left:1278.3px;top:435px;width:397px;height:27.8px;background:#f3f3f3"></div>
<div style="left:1188px;top:463px;width:487.6px;height:112px;background:linear-gradient(to right,#8ecbe8,#c0c0c0)"></div>
<div style="left:1166px;top:462px;width:509px;height:1px;background:#d0d0d0"></div>
<div style="left:1166px;top:490px;width:509px;height:1px;background:#d0d0d0"></div>
<div style="left:1166px;top:518px;width:509px;height:1px;background:#d0d0d0"></div>
<div style="left:1166px;top:546px;width:509px;height:1px;background:#d0d0d0"></div>
<div style="left:1166px;top:574px;width:509px;height:1px;background:#d0d0d0"></div>
<div style="left:1187.2px;top:435px;width:1px;height:140px;background:#d4d4d4"></div>
<div style="left:1278.3px;top:435px;width:1px;height:140px;background:#d4d4d4"></div>
<div style="left:1381.5px;top:435px;width:1px;height:140px;background:#d4d4d4"></div>
<div style="left:1536.1px;top:435px;width:1px;height:140px;background:#d4d4d4"></div>
<div style="left:1611.2px;top:435px;width:1px;height:140px;background:#d4d4d4"></div>
<svg style="left:1171px;top:444px" width="5" height="9"><path d="M0.5 0.5 L4.5 4.5 L0.5 8.5z" fill="#111"/></svg>
<span id="t250" class="t" style="left:1192.40px;top:440.37px;font-size:14.56px;line-height:14.56px;color:#ff0000;font-weight:bold;transform:scaleX(1.1782);">25/10/20...</span>
<span id="t251" class="t" style="left:1283.00px;top:440.82px;font-size:14.51px;line-height:14.51px;transform:scaleX(0.9440);">PBH00006-2...</span>
<span id="t252" class="t" style="left:1387.00px;top:437.32px;font-size:14.51px;line-height:14.51px;transform:scaleX(0.9329);">Nguyễn Văn Sáng</span>
<span id="t253" class="t" style="left:1562.92px;top:440.82px;font-size:14.51px;line-height:14.51px;transform:scaleX(1.0140);">10,689</span>
<span id="t254" class="t" style="left:1192.40px;top:468.82px;font-size:14.51px;line-height:14.51px;transform:scaleX(1.0086);">25/10/2023</span>
<span id="t255" class="t" style="left:1283.00px;top:468.82px;font-size:14.51px;line-height:14.51px;transform:scaleX(0.9440);">PBH00005-2...</span>
<span id="t256" class="t" style="left:1387.00px;top:465.32px;font-size:14.51px;line-height:14.51px;transform:scaleX(0.9421);">Nguyễn Thị Hạnh Phúc</span>
<span id="t257" class="t" style="left:1554.75px;top:468.82px;font-size:14.51px;line-height:14.51px;transform:scaleX(1.0140);">894,520</span>
<span id="t258" class="t" style="left:1192.40px;top:496.82px;font-size:14.51px;line-height:14.51px;transform:scaleX(1.0086);">25/10/2023</span>
<span id="t259" class="t" style="left:1283.00px;top:496.82px;font-size:14.51px;line-height:14.51px;transform:scaleX(0.9440);">PBH00004-2...</span>
<span id="t260" class="t" style="left:1387.00px;top:493.32px;font-size:14.51px;line-height:14.51px;transform:scaleX(0.9421);">Nguyễn Thị Hạnh Phúc</span>
<span id="t261" class="t" style="left:1554.75px;top:496.82px;font-size:14.51px;line-height:14.51px;transform:scaleX(1.0140);">227,040</span>
<span id="t262" class="t" style="left:1192.40px;top:524.82px;font-size:14.51px;line-height:14.51px;transform:scaleX(1.0086);">25/10/2023</span>
<span id="t263" class="t" style="left:1283.00px;top:524.82px;font-size:14.51px;line-height:14.51px;transform:scaleX(0.9440);">PBH00003-2...</span>
<span id="t264" class="t" style="left:1387.00px;top:521.32px;font-size:14.51px;line-height:14.51px;transform:scaleX(0.9696);">Nguyễn Công Dũng</span>
<span id="t265" class="t" style="left:1554.75px;top:524.82px;font-size:14.51px;line-height:14.51px;transform:scaleX(1.0140);">107,360</span>
<span id="t266" class="t" style="left:1192.40px;top:552.82px;font-size:14.51px;line-height:14.51px;transform:scaleX(1.0086);">25/10/2023</span>
<span id="t267" class="t" style="left:1283.00px;top:552.82px;font-size:14.51px;line-height:14.51px;transform:scaleX(0.9440);">PBH00002-2...</span>
<span id="t268" class="t" style="left:1387.00px;top:549.32px;font-size:14.51px;line-height:14.51px;transform:scaleX(0.9329);">Nguyễn Văn Sáng</span>
<span id="t269" class="t" style="left:1554.75px;top:552.82px;font-size:14.51px;line-height:14.51px;transform:scaleX(1.0140);">169,840</span>
<div class="h" style="left:1166px;top:768.4px;width:509px;height:34px;border-top:1px solid #a8a8a8"></div>
<div style="left:1280.3px;top:771px;width:100.2px;height:28px;border:1px dashed #cccccc;background:#fff"></div>
<span id="t270" class="t" style="left:1302.20px;top:780.27px;font-size:14.56px;line-height:14.56px;color:#ff0000;font-weight:bold;transform:scaleX(0.9844);">Có 5 phiếu</span>
<div style="left:1538.5px;top:771px;width:72.1px;height:28px;border:1px dashed #cccccc;background:#fff"></div>
<span id="t271" class="t" style="left:1550.80px;top:780.27px;font-size:14.56px;line-height:14.56px;color:#ff0000;font-weight:bold;transform:scaleX(1.0404);">1,409,...</span>
<div style="left:1166px;top:802px;width:509px;height:17px;border-top:1px dashed #d0d0d0;background:#fff"></div>
<svg style="left:1171px;top:806px" width="6" height="9"><path d="M5 0.5 L0.8 4.5 L5 8.5z" fill="#111"/></svg>
<div class="h" style="left:1184px;top:803px;width:288.2px;height:15px;border:1px solid #c8c8c8"></div>
<svg style="left:1664px;top:806px" width="6" height="9"><path d="M0.8 0.5 L5 4.5 L0.8 8.5z" fill="#111"/></svg></div></body></html>
